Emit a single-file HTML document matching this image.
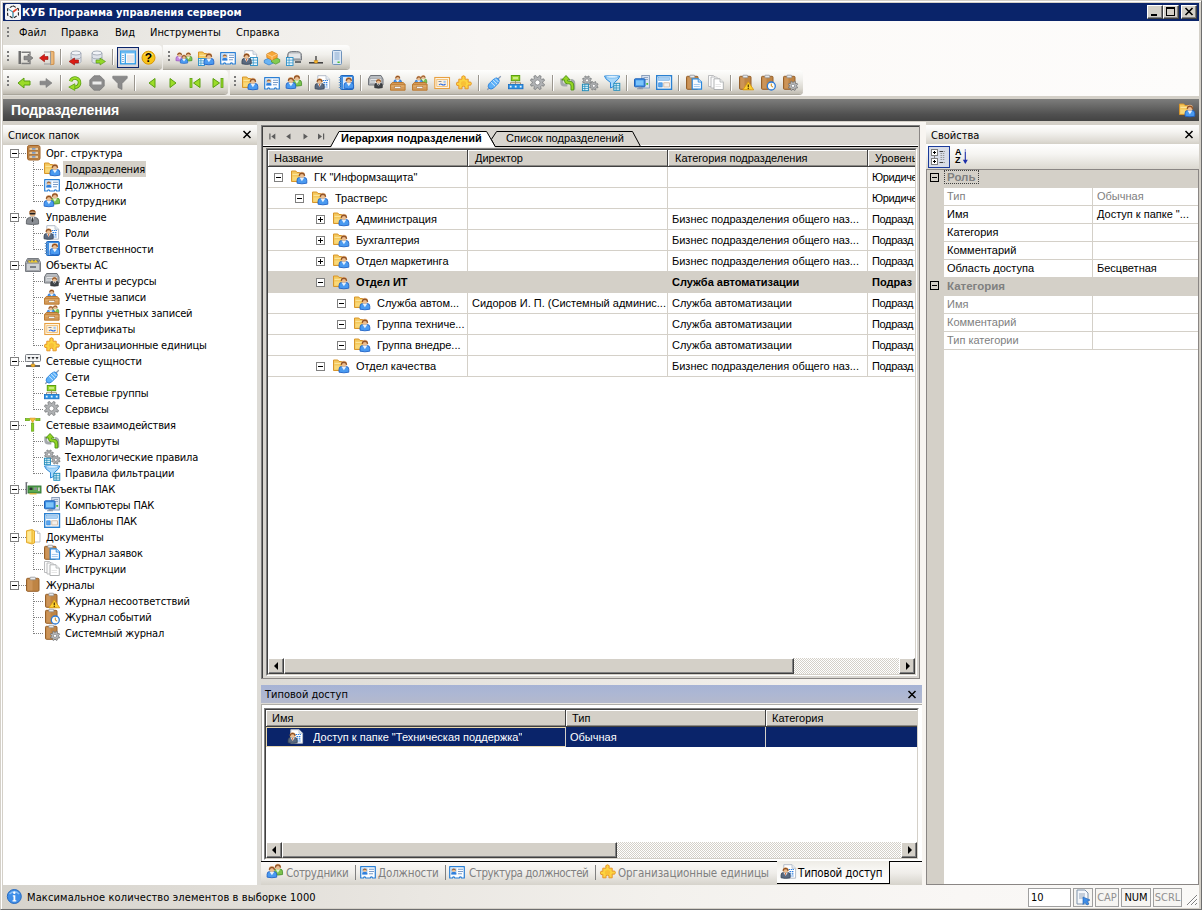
<!DOCTYPE html><html lang="ru"><head><meta charset="utf-8"><title>КУБ Программа управления сервером</title>
<style>
*{box-sizing:border-box;margin:0;padding:0}
html,body{width:1202px;height:910px;overflow:hidden;background:#d4d0c8}
body{position:relative;font-family:"DejaVu Sans Condensed","DejaVu Sans","Liberation Sans",sans-serif;font-size:11px;color:#000;line-height:1}
.abs{position:absolute}
.mss{font-family:"Liberation Sans","DejaVu Sans",sans-serif;font-size:11px}
.tah{font-family:"DejaVu Sans Condensed","DejaVu Sans","Liberation Sans",sans-serif;font-size:11px}
.t{position:absolute;white-space:nowrap;line-height:16px;height:16px}
.tt{position:absolute;white-space:nowrap;line-height:16px;height:16px;margin-top:1px;letter-spacing:-0.17px}
svg{display:block;overflow:visible}
.ic{position:absolute;width:16px;height:16px}
#frame{left:0;top:0;width:1202px;height:910px;background:#d4d0c8;border:1px solid;border-color:#d4d0c8 #6e6e6e #6e6e6e #d4d0c8;box-shadow:inset 1px 1px 0 #fff,inset -1px -1px 0 #d4d0c8}
#title{left:3px;top:3px;width:1196px;height:18px;background:#0a246a;color:#fff;font-weight:bold;font-size:11px}
#menubar{left:3px;top:21px;width:1196px;height:75px;background:linear-gradient(90deg,#dfddd7 0%,#efede9 18%,#f8f6f3 40%,#fcfaf8 65%,#fdfcfb 100%)}
.menu{font-size:11px;top:25px}
.strip{position:absolute;height:24px;border-radius:0 4px 4px 0;background:linear-gradient(180deg,#fefefd 0%,#f1f0ec 40%,#dad7cf 78%,#bdb9af 100%);box-shadow:0 1px 0 #aaa69c}
.grip{position:absolute;width:2px;height:12px;background:repeating-linear-gradient(180deg,#7a7a7a 0 2px,transparent 2px 4px)}
.sep{position:absolute;width:1px;height:16px;background:#9a968e;box-shadow:1px 0 0 #fff}
#hdr{left:3px;top:99px;width:1196px;height:22px;background:linear-gradient(180deg,#7d7d7c 0%,#6a6a69 30%,#505050 70%,#434343 100%);color:#fff;font-family:"Liberation Sans","DejaVu Sans",sans-serif;font-weight:bold;font-size:14px;letter-spacing:-0.08px}
.phead{position:absolute;height:20px;background:linear-gradient(180deg,#fefefe 0%,#f4f3f0 35%,#dedbd4 80%,#d0ccc3 100%);font-size:11px}
.sunk{position:absolute;border:1px solid;border-color:#808080 #fff #fff #808080}
.sunk>.in{position:absolute;left:0;top:0;right:0;bottom:0;border:1px solid;border-color:#404040 #d4d0c8 #d4d0c8 #404040;overflow:hidden}
.gh{position:absolute;background:#d4d0c8;border-right:1px solid #404040;border-bottom:1px solid #404040;box-shadow:inset 1px 1px 0 #fff,inset 0 -1px 0 #8c8a86;font-family:"Liberation Sans","DejaVu Sans",sans-serif;font-size:11px;height:17px;line-height:15px;padding-top:1px;white-space:nowrap;overflow:hidden}
.row{position:absolute;left:0;height:21px;border-bottom:1px solid #d4d0c8;font-family:"Liberation Sans","DejaVu Sans",sans-serif;font-size:11px}
  .cell{position:absolute;top:0;height:20px;line-height:21px;white-space:nowrap;overflow:hidden}
.vline{position:absolute;width:1px;background:#d4d0c8}
.pm{position:absolute;width:9px;height:9px;border:1px solid #808080;background:#fff}
.pm:before{content:"";position:absolute;left:1px;top:3px;width:5px;height:1px;background:#000}
.pm.plus:after{content:"";position:absolute;left:3px;top:1px;width:1px;height:5px;background:#000}
.sb{position:absolute;height:16px;background:repeating-conic-gradient(#fff 0 25%,#d4d0c8 0 50%) 0 0/2px 2px}
.sbbtn{position:absolute;top:0;width:16px;height:16px;background:#d4d0c8;border:1px solid;border-color:#fff #404040 #404040 #fff;box-shadow:inset -1px -1px 0 #808080}
.thumb{position:absolute;top:0;height:16px;background:#d4d0c8;border:1px solid;border-color:#fff #404040 #404040 #fff;box-shadow:inset -1px -1px 0 #808080}
.tri{position:absolute;width:0;height:0;border:4px solid transparent}
.prow{position:absolute;left:17px;height:18px;border-bottom:1px solid #d4d0c8;background:#fff;font-family:"Liberation Sans","DejaVu Sans",sans-serif;font-size:11px;line-height:16px;white-space:nowrap}
.pcat{position:absolute;left:0;height:18px;background:#d4d0c8;font-family:"Liberation Sans","DejaVu Sans",sans-serif;font-size:11px;font-weight:bold;color:#808080;line-height:17px}
.stbox{position:absolute;top:888px;height:19px;border:1px solid #a0a0a0;font-size:11px;line-height:17px;text-align:center;background:#f6f5f2}
.dotv{position:absolute;width:1px;background:repeating-linear-gradient(180deg,#808080 0 1px,transparent 1px 2px)}
.doth{position:absolute;height:1px;background:repeating-linear-gradient(90deg,#808080 0 1px,transparent 1px 2px)}
.btab{position:absolute;top:1px;height:22px;font-size:11px;color:#808080;line-height:22px;white-space:nowrap}
</style></head><body>
<div id="frame" class="abs"></div>
<div id="title" class="abs">
<div class="ic" style="left:2px;top:1px"><svg width="16" height="16" viewBox="0 0 16 16"><rect x="0" y="0" width="16" height="16" rx="1.500" fill="#f2f3f5"/><path d="M8 1.800l5.400 3.100v6.200l-5.400 3.100l-5.400-3.100v-6.200z" fill="#fbfbfc" stroke="#222" stroke-width="1.100" stroke-dasharray="3.200 1.600"/><path d="M8 8v5.500" stroke="#2a7f9a" stroke-width="1.200"/><path d="M8 8l-4.300-2.600" stroke="#3a9ab0" stroke-width="1.100"/><path d="M8 8l3.800-3" stroke="#e8452a" stroke-width="1.600"/></svg></div>
<span class="t" style="left:19px;top:2px">КУБ Программа управления сервером</span>
<div class="abs" style="left:1144px;top:2px;width:16px;height:14px;background:#d4d0c8;border:1px solid;border-color:#fff #404040 #404040 #fff;box-shadow:inset -1px -1px 0 #808080">
<div class="abs" style="left:3px;top:8px;width:6px;height:2px;background:#000"></div>
</div>
<div class="abs" style="left:1160px;top:2px;width:16px;height:14px;background:#d4d0c8;border:1px solid;border-color:#fff #404040 #404040 #fff;box-shadow:inset -1px -1px 0 #808080">
<div class="abs" style="left:2px;top:1px;width:9px;height:9px;border:1px solid #000;border-top-width:2px"></div>
</div>
<div class="abs" style="left:1178px;top:2px;width:16px;height:14px;background:#d4d0c8;border:1px solid;border-color:#fff #404040 #404040 #fff;box-shadow:inset -1px -1px 0 #808080">
<svg class="abs" style="left:3px;top:2px" width="8" height="7" viewBox="0 0 8 7"><path d="M0 0L7 7M7 0L0 7" stroke="#000" stroke-width="1.6" fill="none" transform="translate(.5 0)"/></svg>
</div>
</div>
<div id="menubar" class="abs"></div>
<div class="grip" style="left:7px;top:27px"></div>
<span class="t menu" style="left:19px">Файл</span>
<span class="t menu" style="left:61px">Правка</span>
<span class="t menu" style="left:115px">Вид</span>
<span class="t menu" style="left:150px">Инструменты</span>
<span class="t menu" style="left:236px">Справка</span>
<div class="strip" style="left:3px;top:45px;width:159px"></div>
<div class="strip" style="left:163px;top:45px;width:187px"></div>
<div class="grip" style="left:7px;top:51px"></div><div class="grip" style="left:168px;top:51px"></div>
<div class="abs" style="left:117px;top:47px;width:22px;height:21px;border:1px solid #0a246a;background:#d6d5da"></div>
<div class="ic" style="left:17px;top:50px"><svg width="16" height="16" viewBox="0 0 16 16"><rect x="1.500" y="1" width="2.500" height="13" fill="#6e6e6e"/><path d="M4.500 2.200h8.500v3M13 10.500v3h-8.500" fill="none" stroke="#7c7c7c" stroke-width="1.400"/><path d="M7 6.200h4v-2.200l5 4l-5 4v-2.200h-4z" fill="#8a8a8a" stroke="#606060" stroke-width=".6"/></svg></div>
<div class="ic" style="left:39px;top:50px"><svg width="16" height="16" viewBox="0 0 16 16"><path d="M11.500 1.200l3.500.6v12.400l-3.500.6z" fill="#ecb878" stroke="#c8843a" stroke-width=".8"/><path d="M5 2h6.500v12h-6.500" fill="none" stroke="#9a9a9a" stroke-width="1.100"/><path d="M9 6.500h-3.500v-2.300l-5 3.800l5 3.800v-2.300h3.500z" fill="#d81a14" stroke="#98100a" stroke-width=".6"/></svg></div>
<div class="ic" style="left:68px;top:50px"><svg width="16" height="16" viewBox="0 0 16 16"><path d="M3 3q0-2 5-2t5 2v8.500q0 2-5 2t-5-2z" fill="#dfe3ea" stroke="#a0a8b4" stroke-width=".9"/><path d="M3 3q0 2 5 2t5-2M3 7q0 2 5 2t5-2" fill="none" stroke="#a0a8b4" stroke-width=".9"/><ellipse cx="8" cy="3" rx="4" ry="1.200" fill="#f2f4f8"/><path d="M10.500 10h-4v-2l-5.500 3.500l5.500 3.500v-2h4z" fill="#dc1c14" stroke="#98100a" stroke-width=".6"/></svg></div>
<div class="ic" style="left:90px;top:50px"><svg width="16" height="16" viewBox="0 0 16 16"><path d="M2 3q0-2 5-2t5 2v8.500q0 2-5 2t-5-2z" fill="#dfe3ea" stroke="#a0a8b4" stroke-width=".9"/><path d="M2 3q0 2 5 2t5-2M2 7q0 2 5 2t5-2" fill="none" stroke="#a0a8b4" stroke-width=".9"/><ellipse cx="7" cy="3" rx="4" ry="1.200" fill="#f2f4f8"/><path d="M6 10h4v-2l5.500 3.500l-5.500 3.500v-2h-4z" fill="#94d828" stroke="#4f9010" stroke-width=".6"/></svg></div>
<div class="ic" style="left:120px;top:50px"><svg width="16" height="16" viewBox="0 0 16 16"><rect x=".7" y="1.200" width="14.600" height="12.600" fill="#fff" stroke="#2a9ae8" stroke-width="1.300"/><rect x=".7" y="1.200" width="14.600" height="2.200" fill="#6ab8f0"/><path d="M5.300 3.400v10.400" stroke="#2a9ae8" stroke-width="1.200"/><path d="M2 5.500h2M2 7.500h2M2 9.500h2M2 11.500h2" stroke="#7a9cc4" stroke-width=".8"/><rect x="6.800" y="4.800" width="7.200" height="7.800" fill="#e6e6ea"/></svg></div>
<div class="ic" style="left:141px;top:50px"><svg width="16" height="16" viewBox="0 0 16 16"><circle cx="7.500" cy="7.700" r="6.500" fill="#f8c418" stroke="#d89808" stroke-width="1"/><path d="M3.500 5q4-3.500 8 0" fill="none" stroke="#fdea90" stroke-width="1.500"/></svg><span style="position:absolute;left:0;top:0;width:15px;height:16px;line-height:16px;text-align:center;font:bold 12px/16px 'Liberation Sans',sans-serif;color:#000">?</span></div>
<div class="ic" style="left:176px;top:50px"><svg width="16" height="16" viewBox="0 0 16 16"><path d="M-0.03 10.64v-2.15q0 -2.15 1.99 -2.15h3.26q1.99 0 1.99 2.15v2.15q-3.63 0.89 -7.25 0z" fill="#c48ae0" stroke="#8a4ab8" stroke-width="0.59"/><path d="M1.79 6.49h3.63l-1.81 2.66z" fill="#f1e2fa"/><circle cx="3.6" cy="4.42" r="2.22" fill="#ecbf92"/><path d="M1.38 5.09A2.22 2.22 0 1 1 5.82 5.09L5.20 5.09Q4.93 3.42 3.60 3.75Q2.27 3.42 2.00 5.09z" fill="#8a4a1c" stroke="#8a4a1c" stroke-width="0.30"/><path d="M8.77 10.64v-2.15q0 -2.15 1.99 -2.15h3.26q1.99 0 1.99 2.15v2.15q-3.63 0.89 -7.25 0z" fill="#7cc24e" stroke="#3f8a24" stroke-width="0.59"/><path d="M10.59 6.49h3.63l-1.81 2.66z" fill="#e4f5d8"/><circle cx="12.4" cy="4.42" r="2.22" fill="#ecbf92"/><path d="M10.18 5.09A2.22 2.22 0 1 1 14.62 5.09L14.00 5.09Q13.73 3.42 12.40 3.75Q11.07 3.42 10.80 5.09z" fill="#8a4a1c" stroke="#8a4a1c" stroke-width="0.30"/><path d="M4.37 13.04v-2.15q0 -2.15 1.99 -2.15h3.26q1.99 0 1.99 2.15v2.15q-3.63 0.89 -7.25 0z" fill="#4a9af0" stroke="#1a5cc0" stroke-width="0.59"/><path d="M6.19 8.89h3.63l-1.81 2.66z" fill="#e6f1fd"/><circle cx="8" cy="6.82" r="2.22" fill="#ecbf92"/><path d="M5.78 7.49A2.22 2.22 0 1 1 10.22 7.49L9.60 7.49Q9.33 5.82 8.00 6.15Q6.67 5.82 6.40 7.49z" fill="#8a4a1c" stroke="#8a4a1c" stroke-width="0.30"/></svg></div>
<div class="ic" style="left:198px;top:50px"><svg width="16" height="16" viewBox="0 0 16 16"><path d="M.5 2h4.300l1.200 1.500h5.500v9h-11z" fill="#f4c85c" stroke="#d8962a" stroke-width="1"/><path d="M1.500 4.800h9v1.200h-9z" fill="#fbe49a"/><path d="M1.500 7.500h5v4h-5z" fill="#f9d878"/><rect x="0.5" y="8.5" width="6" height="7" fill="#eaf6fc" stroke="#2a90c8" stroke-width=".9"/><path d="M0.5 10.83h6M0.5 13.17h6M2.90 8.5v7" stroke="#2a90c8" stroke-width=".7"/><path d="M6.00 14.20v-2.90q0 -2.90 2.70 -2.90h4.41q2.70 0 2.70 2.90v2.90q-4.90 1.20 -9.80 0z" fill="#4a9af0" stroke="#1a5cc0" stroke-width="0.80"/><path d="M8.45 8.60h4.90l-2.45 3.60z" fill="#e6f1fd"/><circle cx="10.9" cy="5.80" r="3.00" fill="#ecbf92"/><path d="M7.90 6.70A3.00 3.00 0 1 1 13.90 6.70L13.06 6.70Q12.70 4.45 10.90 4.90Q9.10 4.45 8.74 6.70z" fill="#8a4a1c" stroke="#8a4a1c" stroke-width="0.40"/></svg></div>
<div class="ic" style="left:220px;top:50px"><svg width="16" height="16" viewBox="0 0 16 16"><path d="M.7 2.700h14.600v11.300h-2.800a1.100 1.100 0 0 0-2.200 0h-4.600a1.100 1.100 0 0 0-2.200 0h-2.800z" fill="#fbfdff" stroke="#2a7fd4" stroke-width="1.200" stroke-linejoin="round"/><rect x="2.200" y="4.200" width="5.200" height="6.300" fill="#a4cef6"/><circle cx="4.800" cy="6.200" r="1.800" fill="#ecbf92"/><path d="M3 6.500a1.800 1.800 0 1 1 3.600 0q-.4-1.200-1.800-1.100q-1.400-.1-1.800 1.100z" fill="#8a4a1c" stroke="#8a4a1c" stroke-width=".3"/><path d="M2.300 10.500v-.9q0-1.500 1.500-1.500h2q1.500 0 1.500 1.500v.9z" fill="#2f7fdc"/><path d="M9 5.200h5M9 7.500h5M9 9.800h4" stroke="#7a9cc8" stroke-width="1.100"/></svg></div>
<div class="ic" style="left:242px;top:50px"><svg width="16" height="16" viewBox="0 0 16 16"><path d="M2.800 .7h8.200l3.600 3.600v9.900h-11.800z" fill="#fff" stroke="#b4bcc8" stroke-width="1"/><path d="M11 .7v3.600h3.600" fill="#e8eef6" stroke="#b4bcc8" stroke-width=".8"/><rect x="8.5" y="7.5" width="7" height="8" fill="#eaf6fc" stroke="#2a90c8" stroke-width=".9"/><path d="M8.5 10.17h7M8.5 12.83h7M11.30 7.5v8" stroke="#2a90c8" stroke-width=".7"/><path d="M-0.06 13.83v-2.75q0 -2.75 2.56 -2.75h4.19q2.56 0 2.56 2.75v2.75q-4.66 1.14 -9.31 0z" fill="#5a6a80" stroke="#35404e" stroke-width="0.76"/><path d="M2.27 8.51h4.66l-2.33 3.42z" fill="#dfe6ee"/><path d="M4.03 8.89h1.14l-0.57 3.31z" fill="#e0601c"/><circle cx="4.6" cy="5.85" r="2.85" fill="#ecbf92"/><path d="M1.75 6.70A2.85 2.85 0 1 1 7.45 6.70L6.65 6.70Q6.31 4.57 4.60 5.00Q2.89 4.57 2.55 6.70z" fill="#8a4a1c" stroke="#8a4a1c" stroke-width="0.38"/></svg></div>
<div class="ic" style="left:264px;top:50px"><svg width="16" height="16" viewBox="0 0 16 16"><path d="M.3 10.200l4.700-2.200l4.700 2.200v2.600l-4.700 2.200l-4.700-2.200z" fill="#6ab4f4" stroke="#2a78cc" stroke-width=".7"/><path d="M7.500 9.500l4.200-2l4 2v2.600l-4 2l-4.200-2z" fill="#84cc50" stroke="#4a9428" stroke-width=".7"/><path d="M2.800 4l5.200-2.600l5.200 2.600v3.600l-5.200 2.600l-5.200-2.600z" fill="#f8a838" stroke="#d07a10" stroke-width=".7"/><path d="M2.800 4l5.200 2.600l5.200-2.600M8 6.600v3.600" fill="none" stroke="#fcd8a0" stroke-width=".8"/></svg></div>
<div class="ic" style="left:286px;top:50px"><svg width="16" height="16" viewBox="0 0 16 16"><path d="M1.500 5.500q0-4 4-4h5q5 0 5 4v4.500h-14z" fill="#b4b8bc" stroke="#7a7e84" stroke-width="1"/><rect x="3" y="3.500" width="11" height="4.500" fill="#e4e6e8"/><rect x="0.5" y="7.5" width="6.5" height="8" fill="#eaf6fc" stroke="#2a90c8" stroke-width=".9"/><path d="M0.5 10.17h6.5M0.5 12.83h6.5M3.10 7.5v8" stroke="#2a90c8" stroke-width=".7"/><path d="M9 12h6" stroke="#4a4e54" stroke-width="1.600"/></svg></div>
<div class="ic" style="left:308px;top:50px"><svg width="16" height="16" viewBox="0 0 16 16"><path d="M1 12.800h14" stroke="#3a3a3a" stroke-width="1.500"/><path d="M8 6v6" stroke="#3a3a3a" stroke-width="1.300"/><path d="M6.200 10.500h3.600l-.5 2.600h-2.600z" fill="#f4b428" stroke="#c88210" stroke-width=".5"/></svg></div>
<div class="ic" style="left:329px;top:50px"><svg width="16" height="16" viewBox="0 0 16 16"><rect x="3.500" y=".5" width="9" height="14" rx="1" fill="#dce8f6" stroke="#6f93bb" stroke-width="1"/><path d="M5.500 3h5M5.500 5h5M5.500 7h5M5.500 9h5" stroke="#88aad0" stroke-width="1"/><rect x="8.500" y="11.500" width="2.200" height="1.500" fill="#4cc030"/></svg></div>
<div class="sep" style="left:60px;top:49px"></div>
<div class="sep" style="left:112px;top:49px"></div>
<div class="strip" style="left:3px;top:70px;width:225px"></div>
<div class="strip" style="left:230px;top:70px;width:573px"></div>
<div class="grip" style="left:7px;top:76px"></div><div class="grip" style="left:234px;top:76px"></div>
<div class="ic" style="left:16px;top:75px"><svg width="16" height="16" viewBox="0 0 16 16"><path d="M14 6h-6v-3l-6 5l6 5v-3h6z" fill="#9cdc28" stroke="#5aa010" stroke-width="1" stroke-linejoin="round"/></svg></div>
<div class="ic" style="left:38px;top:75px"><svg width="16" height="16" viewBox="0 0 16 16"><path d="M2 6.200h6v-2.700l6 4.500l-6 4.500v-2.700h-6z" fill="#8a8a8a" stroke="#787878" stroke-width=".6"/></svg></div>
<div class="ic" style="left:67px;top:75px"><svg width="16" height="16" viewBox="0 0 16 16"><path d="M3.600 6.200A4.600 4.600 0 1 1 7.500 12.200" fill="none" stroke="#5aa010" stroke-width="3.600"/><path d="M3.600 6.200A4.600 4.600 0 1 1 7.500 12.200" fill="none" stroke="#9cdc28" stroke-width="2"/><path d="M7.800 8.800v6.600l-6-3.300z" fill="#9cdc28" stroke="#5aa010" stroke-width=".8" stroke-linejoin="round"/></svg></div>
<div class="ic" style="left:89px;top:75px"><svg width="16" height="16" viewBox="0 0 16 16"><path d="M5 .8h6l4.200 4.200v6l-4.200 4.200h-6l-4.200-4.200v-6z" fill="#8c8c8c" stroke="#787878" stroke-width=".8"/><rect x="3.500" y="6.500" width="9" height="3" fill="#ececec"/></svg></div>
<div class="ic" style="left:112px;top:75px"><svg width="16" height="16" viewBox="0 0 16 16"><path d="M.8 1.200h14.400v2l-5.200 5.300v6l-4-2v-4l-5.200-5.300z" fill="#8a8a8a" stroke="#787878" stroke-width=".7"/></svg></div>
<div class="ic" style="left:144px;top:75px"><svg width="16" height="16" viewBox="0 0 16 16"><path d="M11 3.500v9l-6-4.500z" fill="#9cdc28" stroke="#5aa010" stroke-width="1" stroke-linejoin="round"/></svg></div>
<div class="ic" style="left:165px;top:75px"><svg width="16" height="16" viewBox="0 0 16 16"><path d="M5 3.500v9l6-4.500z" fill="#9cdc28" stroke="#5aa010" stroke-width="1" stroke-linejoin="round"/></svg></div>
<div class="ic" style="left:187px;top:75px"><svg width="16" height="16" viewBox="0 0 16 16"><rect x="3" y="3.500" width="2" height="9" fill="#9cdc28" stroke="#5aa010" stroke-width=".8"/><path d="M13 3.500v9l-6.500-4.500z" fill="#9cdc28" stroke="#5aa010" stroke-width="1" stroke-linejoin="round"/></svg></div>
<div class="ic" style="left:210px;top:75px"><svg width="16" height="16" viewBox="0 0 16 16"><rect x="11" y="3.500" width="2" height="9" fill="#9cdc28" stroke="#5aa010" stroke-width=".8"/><path d="M3 3.500v9l6.500-4.500z" fill="#9cdc28" stroke="#5aa010" stroke-width="1" stroke-linejoin="round"/></svg></div>
<div class="ic" style="left:242px;top:75px"><svg width="16" height="16" viewBox="0 0 16 16"><path d="M.5 2h4.300l1.200 1.500h5.500v9h-11z" fill="#f4c85c" stroke="#d8962a" stroke-width="1"/><path d="M1.500 4.800h9v1.200h-9z" fill="#fbe49a"/><path d="M1.500 7.500h5v4h-5z" fill="#f9d878"/><path d="M6.00 14.20v-2.90q0 -2.90 2.70 -2.90h4.41q2.70 0 2.70 2.90v2.90q-4.90 1.20 -9.80 0z" fill="#4a9af0" stroke="#1a5cc0" stroke-width="0.80"/><path d="M8.45 8.60h4.90l-2.45 3.60z" fill="#e6f1fd"/><circle cx="10.9" cy="5.80" r="3.00" fill="#ecbf92"/><path d="M7.90 6.70A3.00 3.00 0 1 1 13.90 6.70L13.06 6.70Q12.70 4.45 10.90 4.90Q9.10 4.45 8.74 6.70z" fill="#8a4a1c" stroke="#8a4a1c" stroke-width="0.40"/></svg></div>
<div class="ic" style="left:264px;top:75px"><svg width="16" height="16" viewBox="0 0 16 16"><path d="M.7 2.700h14.600v11.300h-2.800a1.100 1.100 0 0 0-2.200 0h-4.600a1.100 1.100 0 0 0-2.200 0h-2.800z" fill="#fbfdff" stroke="#2a7fd4" stroke-width="1.200" stroke-linejoin="round"/><rect x="2.200" y="4.200" width="5.200" height="6.300" fill="#a4cef6"/><circle cx="4.800" cy="6.200" r="1.800" fill="#ecbf92"/><path d="M3 6.500a1.800 1.800 0 1 1 3.600 0q-.4-1.200-1.800-1.100q-1.400-.1-1.800 1.100z" fill="#8a4a1c" stroke="#8a4a1c" stroke-width=".3"/><path d="M2.300 10.500v-.9q0-1.500 1.500-1.500h2q1.500 0 1.500 1.500v.9z" fill="#2f7fdc"/><path d="M9 5.200h5M9 7.500h5M9 9.800h4" stroke="#7a9cc8" stroke-width="1.100"/></svg></div>
<div class="ic" style="left:286px;top:75px"><svg width="16" height="16" viewBox="0 0 16 16"><path d="M6.25 10.53v-2.75q0 -2.75 2.56 -2.75h4.19q2.56 0 2.56 2.75v2.75q-4.66 1.14 -9.31 0z" fill="#7cc24e" stroke="#3f8a24" stroke-width="0.76"/><path d="M8.57 5.21h4.66l-2.33 3.42z" fill="#e4f5d8"/><circle cx="10.9" cy="2.55" r="2.85" fill="#ecbf92"/><path d="M8.05 3.40A2.85 2.85 0 1 1 13.75 3.40L12.95 3.40Q12.61 1.27 10.90 1.69Q9.19 1.27 8.85 3.40z" fill="#8a4a1c" stroke="#8a4a1c" stroke-width="0.38"/><path d="M0.10 13.17v-2.84q0 -2.84 2.64 -2.84h4.32q2.64 0 2.64 2.84v2.84q-4.80 1.18 -9.60 0z" fill="#4a9af0" stroke="#1a5cc0" stroke-width="0.78"/><path d="M2.50 7.68h4.80l-2.40 3.52z" fill="#e6f1fd"/><circle cx="4.9" cy="4.94" r="2.94" fill="#ecbf92"/><path d="M1.96 5.82A2.94 2.94 0 1 1 7.84 5.82L7.02 5.82Q6.66 3.62 4.90 4.06Q3.14 3.62 2.78 5.82z" fill="#8a4a1c" stroke="#8a4a1c" stroke-width="0.39"/></svg></div>
<div class="ic" style="left:315px;top:75px"><svg width="16" height="16" viewBox="0 0 16 16"><path d="M2.800 .7h8.200l3.600 3.600v9.900h-11.800z" fill="#fff" stroke="#b4bcc8" stroke-width="1"/><path d="M11 .7v3.600h3.600" fill="#e8eef6" stroke="#b4bcc8" stroke-width=".8"/><path d="M7.500 5.500h5.500M8.500 7.700h4.500M8.500 9.900h4.500M9 12h3.500" stroke="#2b7de0" stroke-width="1.200" stroke-dasharray="1.600 .7"/><path d="M0.04 13.80v-2.70q0 -2.70 2.51 -2.70h4.10q2.51 0 2.51 2.70v2.70q-4.56 1.12 -9.11 0z" fill="#5a6a80" stroke="#35404e" stroke-width="0.74"/><path d="M2.32 8.59h4.56l-2.28 3.34z" fill="#dfe6ee"/><path d="M4.04 8.97h1.12l-0.56 3.24z" fill="#e0601c"/><circle cx="4.6" cy="5.99" r="2.79" fill="#ecbf92"/><path d="M1.81 6.83A2.79 2.79 0 1 1 7.39 6.83L6.61 6.83Q6.27 4.73 4.60 5.15Q2.93 4.73 2.59 6.83z" fill="#8a4a1c" stroke="#8a4a1c" stroke-width="0.37"/></svg></div>
<div class="ic" style="left:338px;top:75px"><svg width="16" height="16" viewBox="0 0 16 16"><rect x="2.500" y=".5" width="12.800" height="14" rx="1" fill="#3f8fe4" stroke="#1f66bd" stroke-width="1"/><rect x="5" y="2" width="9" height="11.500" fill="#dcebfb"/><path d="M.8 2.500h3M.8 5h3M.8 7.500h3M.8 10h3M.8 12.500h3" stroke="#5f8fc2" stroke-width="1.100"/><path d="M6.00 13.17v-2.84q0 -2.84 2.64 -2.84h4.32q2.64 0 2.64 2.84v2.84q-4.80 1.18 -9.60 0z" fill="#4a9af0" stroke="#1a5cc0" stroke-width="0.78"/><path d="M8.40 7.68h4.80l-2.40 3.52z" fill="#e6f1fd"/><circle cx="10.8" cy="4.94" r="2.94" fill="#ecbf92"/><path d="M7.86 5.82A2.94 2.94 0 1 1 13.74 5.82L12.92 5.82Q12.56 3.62 10.80 4.06Q9.04 3.62 8.68 5.82z" fill="#8a4a1c" stroke="#8a4a1c" stroke-width="0.39"/></svg></div>
<div class="ic" style="left:368px;top:75px"><svg width="16" height="16" viewBox="0 0 16 16"><path d="M.5 4l2-3.500h10.500l2 3.500v6h-14.500z" fill="#b8bcc0" stroke="#70747a" stroke-width="1"/><rect x="2" y="3.500" width="11.500" height="5" fill="#e4e6e8" stroke="#8a8e94" stroke-width=".5"/><path d="M3 5.500h5M3 7h4" stroke="#9aa0a8" stroke-width=".7"/><path d="M6.68 12.69v-2.26q0 -2.26 2.10 -2.26h3.44q2.10 0 2.10 2.26v2.26q-3.82 0.94 -7.64 0z" fill="#404448" stroke="#222426" stroke-width="0.62"/><path d="M8.59 8.32h3.82l-1.91 2.80z" fill="#fff"/><path d="M10.03 8.64h0.94l-0.47 2.71z" fill="#222"/><circle cx="10.5" cy="6.14" r="2.34" fill="#ecbf92"/><path d="M8.16 6.84A2.34 2.34 0 1 1 12.84 6.84L12.18 6.84Q11.90 5.09 10.50 5.44Q9.10 5.09 8.82 6.84z" fill="#8a4a1c" stroke="#8a4a1c" stroke-width="0.31"/></svg></div>
<div class="ic" style="left:390px;top:75px"><svg width="16" height="16" viewBox="0 0 16 16"><path d="M3.88 9.19v-2.26q0 -2.26 2.10 -2.26h3.44q2.10 0 2.10 2.26v2.26q-3.82 0.94 -7.64 0z" fill="#4a9af0" stroke="#1a5cc0" stroke-width="0.62"/><path d="M5.79 4.82h3.82l-1.91 2.80z" fill="#e6f1fd"/><circle cx="7.7" cy="2.64" r="2.34" fill="#ecbf92"/><path d="M5.36 3.34A2.34 2.34 0 1 1 10.04 3.34L9.38 3.34Q9.10 1.59 7.70 1.94Q6.30 1.59 6.02 3.34z" fill="#8a4a1c" stroke="#8a4a1c" stroke-width="0.31"/><path d="M.5 9.500l1.800-2h11l1.800 2v5.700h-14.600z" fill="#d49a58" stroke="#b87428" stroke-width=".9"/><path d="M.5 9.800h14.600" stroke="#b87428" stroke-width=".8"/><path d="M1.200 10.500h13.200v1h-13.200z" fill="#e8b878"/><rect x="4.800" y="11.600" width="6" height="1.800" fill="#eef4fa" stroke="#a06428" stroke-width=".4"/></svg></div>
<div class="ic" style="left:412px;top:75px"><svg width="16" height="16" viewBox="0 0 16 16"><path d="M7.87 7.98v-2.03q0 -2.03 1.89 -2.03h3.09q1.89 0 1.89 2.03v2.03q-3.43 0.84 -6.86 0z" fill="#7cc24e" stroke="#3f8a24" stroke-width="0.56"/><path d="M9.59 4.06h3.43l-1.72 2.52z" fill="#e4f5d8"/><circle cx="11.3" cy="2.10" r="2.10" fill="#ecbf92"/><path d="M9.20 2.73A2.10 2.10 0 1 1 13.40 2.73L12.81 2.73Q12.56 1.15 11.30 1.47Q10.04 1.15 9.79 2.73z" fill="#8a4a1c" stroke="#8a4a1c" stroke-width="0.28"/><path d="M3.12 9.35v-2.17q0 -2.17 2.02 -2.17h3.31q2.02 0 2.02 2.17v2.17q-3.68 0.90 -7.35 0z" fill="#4a9af0" stroke="#1a5cc0" stroke-width="0.60"/><path d="M4.96 5.15h3.68l-1.84 2.70z" fill="#e6f1fd"/><circle cx="6.8" cy="3.05" r="2.25" fill="#ecbf92"/><path d="M4.55 3.72A2.25 2.25 0 1 1 9.05 3.72L8.42 3.72Q8.15 2.04 6.80 2.38Q5.45 2.04 5.18 3.72z" fill="#8a4a1c" stroke="#8a4a1c" stroke-width="0.30"/><path d="M.5 9.500l1.800-2h11l1.800 2v5.700h-14.600z" fill="#d49a58" stroke="#b87428" stroke-width=".9"/><path d="M.5 9.800h14.600" stroke="#b87428" stroke-width=".8"/><path d="M1.200 10.500h13.200v1h-13.200z" fill="#e8b878"/><rect x="4.800" y="11.600" width="6" height="1.800" fill="#eef4fa" stroke="#a06428" stroke-width=".4"/></svg></div>
<div class="ic" style="left:434px;top:75px"><svg width="16" height="16" viewBox="0 0 16 16"><rect x=".8" y="2.500" width="14.700" height="11" fill="#fff8ec" stroke="#e8a040" stroke-width="1.100"/><rect x="2.800" y="4.500" width="10.700" height="7" fill="#fdf0dc" stroke="#eeb868" stroke-width=".8"/><path d="M4.500 6.500h3" stroke="#8a8e94" stroke-width="1"/><rect x="9.500" y="5.800" width="2.200" height="2" fill="#9cc4f0"/><path d="M5 10q1.500-1.800 3-.5t3.500-.5" fill="none" stroke="#2a6ae0" stroke-width="1.100"/></svg></div>
<div class="ic" style="left:456px;top:75px"><svg width="16" height="16" viewBox="0 0 16 16"><path d="M2.800 4.200h3.200q-1.100-3.400 1.500-3.400t1.500 3.400h3.200v3q3.200-1.100 3.200 1.400t-3.200 1.400v3.800h-3.300q1.100-2.600-1.400-2.600t-1.400 2.600h-3.300v-3.400q-2.400 1.100-2.400-1.500t2.400-1.500z" fill="#fcd440" stroke="#e8962a" stroke-width="1"/><circle cx="7.500" cy="8.500" r="2.600" fill="#f8b830" opacity=".7"/></svg></div>
<div class="ic" style="left:486px;top:75px"><svg width="16" height="16" viewBox="0 0 16 16"><path d="M1.300 14.700l2.500-2.500M12.200 3.800l2.600-2.600" stroke="#8a9ab0" stroke-width="1.300"/><path d="M3 8.800l5-5q2.600-1.800 4.400 0q1.800 1.800 0 4.400l-5 5q-2.600 1.800-4.400 0q-1.800-1.800 0-4.400z" fill="#5cb0f8" stroke="#2a80d8" stroke-width=".9"/><path d="M4.800 7l4.200 4.200M6.800 5l4.200 4.200M8.800 3.300l3.900 3.900" stroke="#d4ecfe" stroke-width="1"/></svg></div>
<div class="ic" style="left:508px;top:75px"><svg width="16" height="16" viewBox="0 0 16 16"><rect x="3.300" y=".5" width="8.400" height="5.200" fill="#98d428" stroke="#5aa010" stroke-width="1"/><rect x="5" y="2" width="5" height="2.200" fill="#c8ec80"/><path d="M7.500 5.700v2M2.500 9.500v-1.800h10v1.800M7.500 7.700v1.800" stroke="#a08868" stroke-width=".9" fill="none"/><rect x=".4" y="9.400" width="14.600" height="4.400" fill="#2a92e4" stroke="#1a6cc0" stroke-width=".8"/><rect x="1.800" y="10.700" width="1.800" height="1.800" fill="#e8f4fe"/><rect x="6.800" y="10.700" width="1.800" height="1.800" fill="#e8f4fe"/><rect x="11.800" y="10.700" width="1.800" height="1.800" fill="#e8f4fe"/></svg></div>
<div class="ic" style="left:530px;top:75px"><svg width="16" height="16" viewBox="0 0 16 16"><path d="M14.55 9.40L13.83 11.14L11.67 10.70L10.70 11.67L11.14 13.83L9.40 14.55L8.18 12.71L6.82 12.71L5.60 14.55L3.86 13.83L4.30 11.67L3.33 10.70L1.17 11.14L0.45 9.40L2.29 8.18L2.29 6.82L0.45 5.60L1.17 3.86L3.33 4.30L4.30 3.33L3.86 1.17L5.60 0.45L6.82 2.29L8.18 2.29L9.40 0.45L11.14 1.17L10.70 3.33L11.67 4.30L13.83 3.86L14.55 5.60L12.71 6.82L12.71 8.18z" fill="#b0b2b4" stroke="#707274" stroke-width=".7" stroke-linejoin="round"/><circle cx="7.5" cy="7.5" r="2.48" fill="#fff" stroke="#707274" stroke-width=".6"/></svg></div>
<div class="ic" style="left:560px;top:75px"><svg width="16" height="16" viewBox="0 0 16 16"><path d="M1.800 3.500v4q0 2.500 2.500 2.500h3" fill="none" stroke="#a4a8ac" stroke-width="3"/><path d="M13.800 14.500v-6q0-3-3-3" fill="none" stroke="#a4a8ac" stroke-width="3"/><path d="M11 15v-4q0-2.200-2.200-2.200h-1.300q-3 0-3-3v-.8h-2.700l4.200-4.500l4.200 4.500h-2.700v.6q0 .6.600.6h.9q4.800 0 4.800 4.800v4z" fill="#94d424" stroke="#4a9010" stroke-width=".9" stroke-linejoin="round"/></svg></div>
<div class="ic" style="left:582px;top:75px"><svg width="16" height="16" viewBox="0 0 16 16"><path d="M9.44 6.59L8.99 7.70L7.63 7.42L7.02 8.03L7.30 9.39L6.19 9.84L5.43 8.68L4.57 8.68L3.81 9.84L2.70 9.39L2.98 8.03L2.37 7.42L1.01 7.70L0.56 6.59L1.72 5.83L1.72 4.97L0.56 4.21L1.01 3.10L2.37 3.38L2.98 2.77L2.70 1.41L3.81 0.96L4.57 2.12L5.43 2.12L6.19 0.96L7.30 1.41L7.02 2.77L7.63 3.38L8.99 3.10L9.44 4.21L8.28 4.97L8.28 5.83z" fill="#b0b2b4" stroke="#707274" stroke-width=".7" stroke-linejoin="round"/><circle cx="5" cy="5.4" r="1.56" fill="#fff" stroke="#707274" stroke-width=".6"/><path d="M16.05 11.94L15.61 13.00L14.31 12.73L13.73 13.31L14.00 14.61L12.94 15.05L12.21 13.94L11.39 13.94L10.66 15.05L9.60 14.61L9.87 13.31L9.29 12.73L7.99 13.00L7.55 11.94L8.66 11.21L8.66 10.39L7.55 9.66L7.99 8.60L9.29 8.87L9.87 8.29L9.60 6.99L10.66 6.55L11.39 7.66L12.21 7.66L12.94 6.55L14.00 6.99L13.73 8.29L14.31 8.87L15.61 8.60L16.05 9.66L14.94 10.39L14.94 11.21z" fill="#b0b2b4" stroke="#707274" stroke-width=".7" stroke-linejoin="round"/><circle cx="11.8" cy="10.8" r="1.50" fill="#fff" stroke="#707274" stroke-width=".6"/><rect x="0.4" y="9.2" width="6" height="6.5" fill="#d8f0f8" stroke="#1a88b8" stroke-width=".9"/><path d="M0.4 11.37h6M0.4 13.53h6M2.80 9.2v6.5" stroke="#1a88b8" stroke-width=".7"/></svg></div>
<div class="ic" style="left:604px;top:75px"><svg width="16" height="16" viewBox="0 0 16 16"><path d="M.5 1h15.200q0 2.500-5.200 6.500v3.500l-4 2v-5.500q-6-4-6-6.500z" fill="#a8d8fa" stroke="#2a88d8" stroke-width="1"/><ellipse cx="8.100" cy="1.800" rx="6.600" ry="1.300" fill="#e0f2fe" stroke="#5aa8e8" stroke-width=".6"/><rect x="9.8" y="8.3" width="6" height="7" fill="#d8f0f8" stroke="#1a88b8" stroke-width=".9"/><path d="M9.8 10.63h6M9.8 12.97h6M12.20 8.3v7" stroke="#1a88b8" stroke-width=".7"/></svg></div>
<div class="ic" style="left:634px;top:75px"><svg width="16" height="16" viewBox="0 0 16 16"><rect x="7.800" y=".5" width="7.600" height="12.500" fill="#dce4f0" stroke="#8098b8" stroke-width=".9"/><path d="M9.500 2.500h4.500M9.500 4.500h4.500" stroke="#8098b8" stroke-width=".8"/><rect x="12.300" y="8" width="1.800" height="1.800" fill="#4cc030"/><rect x=".5" y="3.800" width="10.500" height="8" rx=".8" fill="#3a8ee4" stroke="#1f62b8" stroke-width="1"/><rect x="2" y="5.300" width="7.500" height="5" fill="#7cc4fa"/><path d="M3 14.300h6v-1h-1.500v-1.500h-3v1.500h-1.500z" fill="#8a98ac"/></svg></div>
<div class="ic" style="left:656px;top:75px"><svg width="16" height="16" viewBox="0 0 16 16"><rect x=".7" y=".7" width="14.800" height="13.600" fill="#fff" stroke="#2a80d0" stroke-width="1.400"/><rect x="2.700" y="2.700" width="10.800" height="2.600" fill="#a8d0f4" stroke="#5aa0e0" stroke-width=".5"/><rect x="2.700" y="7.800" width="3.500" height="4.200" fill="#5aa6f0" stroke="#2a80d0" stroke-width=".6"/><rect x="7.800" y="7.800" width="5.700" height="4.200" fill="#f4f0ec" stroke="#c8a890" stroke-width=".7"/></svg></div>
<div class="ic" style="left:686px;top:75px"><svg width="16" height="16" viewBox="0 0 16 16"><rect x="0.5" y="1.300" width="11.500" height="13" rx="1" fill="#be8444" stroke="#96602a" stroke-width="1"/><path d="M1.5 2.500h4v11h-4z" fill="#cc9458"/><rect x="3.8" y=".2" width="5" height="2.600" rx=".8" fill="#e8eaec" stroke="#8a8e94" stroke-width=".7"/><path d="M6.200 3.800h6l3.300 3.300v7h-9.300z" fill="#f8fbff" stroke="#2a88dc" stroke-width="1.200"/><path d="M12.200 3.800v3.300h3.300" fill="#cfe4fa" stroke="#2a88dc" stroke-width=".8"/><path d="M7.800 9.500h6M7.800 11.500h6" stroke="#a8ccf0" stroke-width="1"/></svg></div>
<div class="ic" style="left:708px;top:75px"><svg width="16" height="16" viewBox="0 0 16 16"><path d="M.5 .5h5l2.500 2.500v8.500h-7.500z" fill="#fbfbfb" stroke="#b4b6b8" stroke-width=".9"/><path d="M3 2h5.500l2.500 2.500v8.500h-8z" fill="#fbfbfb" stroke="#b4b6b8" stroke-width=".9"/><path d="M6 3.800h6l3.300 3.300v7.400h-9.300z" fill="#fff" stroke="#a8aaac" stroke-width=".9"/><path d="M12 3.800v3.300h3.300" fill="#eceded" stroke="#a8aaac" stroke-width=".7"/><path d="M7.500 9.500h5.500M7.500 11.500h5.500" stroke="#e0e0e0" stroke-width=".8"/></svg></div>
<div class="ic" style="left:738px;top:75px"><svg width="16" height="16" viewBox="0 0 16 16"><rect x="1.5" y="1.300" width="11.500" height="13" rx="1" fill="#be8444" stroke="#96602a" stroke-width="1"/><path d="M2.5 2.500h4v11h-4z" fill="#cc9458"/><rect x="4.8" y=".2" width="5" height="2.600" rx=".8" fill="#e8eaec" stroke="#8a8e94" stroke-width=".7"/><path d="M10.300 6.800l5.400 8h-10.800z" fill="#fcd030" stroke="#d89810" stroke-width=".9" stroke-linejoin="round"/><path d="M10.300 9.500v2.800" stroke="#5a3a00" stroke-width="1.300"/><circle cx="10.300" cy="13.500" r=".7" fill="#5a3a00"/></svg></div>
<div class="ic" style="left:760px;top:75px"><svg width="16" height="16" viewBox="0 0 16 16"><rect x="1.5" y="1.300" width="11.500" height="13" rx="1" fill="#be8444" stroke="#96602a" stroke-width="1"/><path d="M2.5 2.500h4v11h-4z" fill="#cc9458"/><rect x="4.8" y=".2" width="5" height="2.600" rx=".8" fill="#e8eaec" stroke="#8a8e94" stroke-width=".7"/><circle cx="11.300" cy="11" r="4" fill="#fdfdf6" stroke="#2a7ad8" stroke-width="1.300"/><path d="M11.300 8.600v2.500l1.800 1" fill="none" stroke="#d08a1c" stroke-width="1"/></svg></div>
<div class="ic" style="left:782px;top:75px"><svg width="16" height="16" viewBox="0 0 16 16"><rect x="1.5" y="1.300" width="11.500" height="13" rx="1" fill="#be8444" stroke="#96602a" stroke-width="1"/><path d="M2.5 2.500h4v11h-4z" fill="#cc9458"/><rect x="4.8" y=".2" width="5" height="2.600" rx=".8" fill="#e8eaec" stroke="#8a8e94" stroke-width=".7"/><path d="M15.64 12.05L15.16 13.20L13.74 12.91L13.11 13.54L13.40 14.96L12.25 15.44L11.45 14.23L10.55 14.23L9.75 15.44L8.60 14.96L8.89 13.54L8.26 12.91L6.84 13.20L6.36 12.05L7.57 11.25L7.57 10.35L6.36 9.55L6.84 8.40L8.26 8.69L8.89 8.06L8.60 6.64L9.75 6.16L10.55 7.37L11.45 7.37L12.25 6.16L13.40 6.64L13.11 8.06L13.74 8.69L15.16 8.40L15.64 9.55L14.43 10.35L14.43 11.25z" fill="#b8babc" stroke="#6a6c6e" stroke-width=".7" stroke-linejoin="round"/><circle cx="11" cy="10.8" r="1.63" fill="#fff" stroke="#6a6c6e" stroke-width=".6"/></svg></div>
<div class="sep" style="left:60px;top:75px"></div>
<div class="sep" style="left:134px;top:75px"></div>
<div class="sep" style="left:308px;top:75px"></div>
<div class="sep" style="left:360px;top:75px"></div>
<div class="sep" style="left:478px;top:75px"></div>
<div class="sep" style="left:552px;top:75px"></div>
<div class="sep" style="left:626px;top:75px"></div>
<div class="sep" style="left:678px;top:75px"></div>
<div class="sep" style="left:730px;top:75px"></div>
<div id="hdr" class="abs"><span class="t" style="left:8px;top:3px">Подразделения</span></div>
<div class="ic" style="left:1179px;top:102px"><svg width="16" height="16" viewBox="0 0 16 16"><path d="M.5 2h4.300l1.200 1.500h5.500v9h-11z" fill="#f4c85c" stroke="#d8962a" stroke-width="1"/><path d="M1.500 4.800h9v1.200h-9z" fill="#fbe49a"/><path d="M1.500 7.500h5v4h-5z" fill="#f9d878"/><path d="M6.00 14.20v-2.90q0 -2.90 2.70 -2.90h4.41q2.70 0 2.70 2.90v2.90q-4.90 1.20 -9.80 0z" fill="#4a9af0" stroke="#1a5cc0" stroke-width="0.80"/><path d="M8.45 8.60h4.90l-2.45 3.60z" fill="#e6f1fd"/><circle cx="10.9" cy="5.80" r="3.00" fill="#ecbf92"/><path d="M7.90 6.70A3.00 3.00 0 1 1 13.90 6.70L13.06 6.70Q12.70 4.45 10.90 4.90Q9.10 4.45 8.74 6.70z" fill="#8a4a1c" stroke="#8a4a1c" stroke-width="0.40"/></svg></div>
<div class="abs" style="left:3px;top:125px;width:254px;height:760px;background:#fff"></div>
<div class="phead" style="left:3px;top:125px;width:254px"><span class="t" style="left:5px;top:3px">Список папок</span><svg class="abs" style="left:240px;top:6px" width="8" height="7" viewBox="0 0 8 7"><path d="M.5 0L7.5 7M7.5 0L.5 7" stroke="#000" stroke-width="1.5" fill="none"/></svg></div>
<div class="dotv" style="left:14px;top:153px;height:432px"></div>
<div class="dotv" style="left:33px;top:161px;height:41px"></div>
<div class="dotv" style="left:33px;top:225px;height:25px"></div>
<div class="dotv" style="left:33px;top:273px;height:73px"></div>
<div class="dotv" style="left:33px;top:369px;height:41px"></div>
<div class="dotv" style="left:33px;top:433px;height:41px"></div>
<div class="dotv" style="left:33px;top:497px;height:25px"></div>
<div class="dotv" style="left:33px;top:545px;height:25px"></div>
<div class="dotv" style="left:33px;top:593px;height:41px"></div>
<div class="doth" style="left:19px;top:153px;width:7px"></div>
<div class="pm" style="left:10px;top:149px"></div>
<div class="ic" style="left:26px;top:145px"><svg width="16" height="16" viewBox="0 0 16 16"><rect x="1.500" y=".5" width="12.500" height="14.500" rx="1.800" fill="#c98c4c" stroke="#a06428" stroke-width="1"/><rect x="3" y="2.200" width="9.500" height="3.200" fill="#eccb9c" stroke="#9a6228" stroke-width=".6"/><rect x="3" y="6.200" width="9.500" height="3.200" fill="#eccb9c" stroke="#9a6228" stroke-width=".6"/><rect x="3" y="10.200" width="9.500" height="3.200" fill="#eccb9c" stroke="#9a6228" stroke-width=".6"/><path d="M6 3.800h3.500M6 7.800h3.500M6 11.800h3.500" stroke="#5a8cd0" stroke-width="1.200"/></svg></div>
<span class="tt" style="left:46px;top:145px">Орг. структура</span>
<div class="doth" style="left:34px;top:169px;width:10px"></div>
<div class="ic" style="left:44px;top:161px"><svg width="16" height="16" viewBox="0 0 16 16"><path d="M.5 2h4.300l1.200 1.500h5.500v9h-11z" fill="#f4c85c" stroke="#d8962a" stroke-width="1"/><path d="M1.500 4.800h9v1.200h-9z" fill="#fbe49a"/><path d="M1.500 7.500h5v4h-5z" fill="#f9d878"/><path d="M6.00 14.20v-2.90q0 -2.90 2.70 -2.90h4.41q2.70 0 2.70 2.90v2.90q-4.90 1.20 -9.80 0z" fill="#4a9af0" stroke="#1a5cc0" stroke-width="0.80"/><path d="M8.45 8.60h4.90l-2.45 3.60z" fill="#e6f1fd"/><circle cx="10.9" cy="5.80" r="3.00" fill="#ecbf92"/><path d="M7.90 6.70A3.00 3.00 0 1 1 13.90 6.70L13.06 6.70Q12.70 4.45 10.90 4.90Q9.10 4.45 8.74 6.70z" fill="#8a4a1c" stroke="#8a4a1c" stroke-width="0.40"/></svg></div>
<div class="abs" style="left:63px;top:161px;width:83px;height:16px;background:#d4d0c8"></div>
<span class="tt" style="left:65px;top:161px">Подразделения</span>
<div class="doth" style="left:34px;top:185px;width:10px"></div>
<div class="ic" style="left:44px;top:177px"><svg width="16" height="16" viewBox="0 0 16 16"><path d="M.7 2.700h14.600v11.300h-2.800a1.100 1.100 0 0 0-2.200 0h-4.600a1.100 1.100 0 0 0-2.200 0h-2.800z" fill="#fbfdff" stroke="#2a7fd4" stroke-width="1.200" stroke-linejoin="round"/><rect x="2.200" y="4.200" width="5.200" height="6.300" fill="#a4cef6"/><circle cx="4.800" cy="6.200" r="1.800" fill="#ecbf92"/><path d="M3 6.500a1.800 1.800 0 1 1 3.600 0q-.4-1.200-1.800-1.100q-1.400-.1-1.800 1.100z" fill="#8a4a1c" stroke="#8a4a1c" stroke-width=".3"/><path d="M2.300 10.500v-.9q0-1.500 1.500-1.500h2q1.500 0 1.500 1.500v.9z" fill="#2f7fdc"/><path d="M9 5.200h5M9 7.500h5M9 9.800h4" stroke="#7a9cc8" stroke-width="1.100"/></svg></div>
<span class="tt" style="left:65px;top:177px">Должности</span>
<div class="doth" style="left:34px;top:201px;width:10px"></div>
<div class="ic" style="left:44px;top:193px"><svg width="16" height="16" viewBox="0 0 16 16"><path d="M6.25 10.53v-2.75q0 -2.75 2.56 -2.75h4.19q2.56 0 2.56 2.75v2.75q-4.66 1.14 -9.31 0z" fill="#7cc24e" stroke="#3f8a24" stroke-width="0.76"/><path d="M8.57 5.21h4.66l-2.33 3.42z" fill="#e4f5d8"/><circle cx="10.9" cy="2.55" r="2.85" fill="#ecbf92"/><path d="M8.05 3.40A2.85 2.85 0 1 1 13.75 3.40L12.95 3.40Q12.61 1.27 10.90 1.69Q9.19 1.27 8.85 3.40z" fill="#8a4a1c" stroke="#8a4a1c" stroke-width="0.38"/><path d="M0.10 13.17v-2.84q0 -2.84 2.64 -2.84h4.32q2.64 0 2.64 2.84v2.84q-4.80 1.18 -9.60 0z" fill="#4a9af0" stroke="#1a5cc0" stroke-width="0.78"/><path d="M2.50 7.68h4.80l-2.40 3.52z" fill="#e6f1fd"/><circle cx="4.9" cy="4.94" r="2.94" fill="#ecbf92"/><path d="M1.96 5.82A2.94 2.94 0 1 1 7.84 5.82L7.02 5.82Q6.66 3.62 4.90 4.06Q3.14 3.62 2.78 5.82z" fill="#8a4a1c" stroke="#8a4a1c" stroke-width="0.39"/></svg></div>
<span class="tt" style="left:65px;top:193px">Сотрудники</span>
<div class="doth" style="left:19px;top:217px;width:7px"></div>
<div class="pm" style="left:10px;top:213px"></div>
<div class="ic" style="left:26px;top:209px"><svg width="16" height="16" viewBox="0 0 16 16"><path d="M.4 15v-3q0-3 3-3.600l1.800-.4h2.600l1.800.4q3 .6 3 3.600v3q-6.100 1-12.200 0z" fill="#8a8e94" stroke="#55595e" stroke-width=".8"/><path d="M4.800 8.200l1.700 4l1.700-4z" fill="#fff"/><path d="M6 8.600h1l.4 3.400l-.9 1.200l-.9-1.200z" fill="#33363a"/><circle cx="6.500" cy="4.200" r="3.200" fill="#e8b888"/><path d="M3.300 4a3.200 3.200 0 0 1 6.400 0q-1.200-1.500-3.200-1.400q-2-.1-3.200 1.400z" fill="#8a4a1c"/><rect x="3.600" y="3.800" width="5.800" height="1.700" rx=".7" fill="#1e1e20"/></svg></div>
<span class="tt" style="left:46px;top:209px">Управление</span>
<div class="doth" style="left:34px;top:233px;width:10px"></div>
<div class="ic" style="left:44px;top:225px"><svg width="16" height="16" viewBox="0 0 16 16"><path d="M2.800 .7h8.200l3.600 3.600v9.900h-11.800z" fill="#fff" stroke="#b4bcc8" stroke-width="1"/><path d="M11 .7v3.600h3.600" fill="#e8eef6" stroke="#b4bcc8" stroke-width=".8"/><path d="M7.500 5.500h5.500M8.500 7.700h4.500M8.500 9.900h4.500M9 12h3.500" stroke="#2b7de0" stroke-width="1.200" stroke-dasharray="1.600 .7"/><path d="M0.04 13.80v-2.70q0 -2.70 2.51 -2.70h4.10q2.51 0 2.51 2.70v2.70q-4.56 1.12 -9.11 0z" fill="#5a6a80" stroke="#35404e" stroke-width="0.74"/><path d="M2.32 8.59h4.56l-2.28 3.34z" fill="#dfe6ee"/><path d="M4.04 8.97h1.12l-0.56 3.24z" fill="#e0601c"/><circle cx="4.6" cy="5.99" r="2.79" fill="#ecbf92"/><path d="M1.81 6.83A2.79 2.79 0 1 1 7.39 6.83L6.61 6.83Q6.27 4.73 4.60 5.15Q2.93 4.73 2.59 6.83z" fill="#8a4a1c" stroke="#8a4a1c" stroke-width="0.37"/></svg></div>
<span class="tt" style="left:65px;top:225px">Роли</span>
<div class="doth" style="left:34px;top:249px;width:10px"></div>
<div class="ic" style="left:44px;top:241px"><svg width="16" height="16" viewBox="0 0 16 16"><rect x="2.500" y=".5" width="12.800" height="14" rx="1" fill="#3f8fe4" stroke="#1f66bd" stroke-width="1"/><rect x="5" y="2" width="9" height="11.500" fill="#dcebfb"/><path d="M.8 2.500h3M.8 5h3M.8 7.500h3M.8 10h3M.8 12.500h3" stroke="#5f8fc2" stroke-width="1.100"/><path d="M6.00 13.17v-2.84q0 -2.84 2.64 -2.84h4.32q2.64 0 2.64 2.84v2.84q-4.80 1.18 -9.60 0z" fill="#4a9af0" stroke="#1a5cc0" stroke-width="0.78"/><path d="M8.40 7.68h4.80l-2.40 3.52z" fill="#e6f1fd"/><circle cx="10.8" cy="4.94" r="2.94" fill="#ecbf92"/><path d="M7.86 5.82A2.94 2.94 0 1 1 13.74 5.82L12.92 5.82Q12.56 3.62 10.80 4.06Q9.04 3.62 8.68 5.82z" fill="#8a4a1c" stroke="#8a4a1c" stroke-width="0.39"/></svg></div>
<span class="tt" style="left:65px;top:241px">Ответственности</span>
<div class="doth" style="left:19px;top:265px;width:7px"></div>
<div class="pm" style="left:10px;top:261px"></div>
<div class="ic" style="left:25px;top:257px"><svg width="16" height="16" viewBox="0 0 16 16"><path d="M.5 5.500l2-4h11l2 4v9h-15z" fill="#b4b7bb" stroke="#787c82" stroke-width="1"/><path d="M2.800 2.500h10.400l1 3h-12.400z" fill="#6e7278"/><path d="M3.500 2.700l2 2l1.500-2l2 2l1.500-2l2 2v.8h-9z" fill="#f0cc30"/><rect x="1.500" y="6.500" width="13" height="7" fill="#cfd2d5" stroke="#8a8e94" stroke-width=".6"/><rect x="5" y="9" width="6" height="2" fill="#7c8086"/></svg></div>
<span class="tt" style="left:46px;top:257px">Объекты АС</span>
<div class="doth" style="left:34px;top:281px;width:10px"></div>
<div class="ic" style="left:44px;top:273px"><svg width="16" height="16" viewBox="0 0 16 16"><path d="M.5 4l2-3.500h10.500l2 3.500v6h-14.500z" fill="#b8bcc0" stroke="#70747a" stroke-width="1"/><rect x="2" y="3.500" width="11.500" height="5" fill="#e4e6e8" stroke="#8a8e94" stroke-width=".5"/><path d="M3 5.500h5M3 7h4" stroke="#9aa0a8" stroke-width=".7"/><path d="M6.68 12.69v-2.26q0 -2.26 2.10 -2.26h3.44q2.10 0 2.10 2.26v2.26q-3.82 0.94 -7.64 0z" fill="#404448" stroke="#222426" stroke-width="0.62"/><path d="M8.59 8.32h3.82l-1.91 2.80z" fill="#fff"/><path d="M10.03 8.64h0.94l-0.47 2.71z" fill="#222"/><circle cx="10.5" cy="6.14" r="2.34" fill="#ecbf92"/><path d="M8.16 6.84A2.34 2.34 0 1 1 12.84 6.84L12.18 6.84Q11.90 5.09 10.50 5.44Q9.10 5.09 8.82 6.84z" fill="#8a4a1c" stroke="#8a4a1c" stroke-width="0.31"/></svg></div>
<span class="tt" style="left:65px;top:273px">Агенты и ресурсы</span>
<div class="doth" style="left:34px;top:297px;width:10px"></div>
<div class="ic" style="left:44px;top:289px"><svg width="16" height="16" viewBox="0 0 16 16"><path d="M3.88 9.19v-2.26q0 -2.26 2.10 -2.26h3.44q2.10 0 2.10 2.26v2.26q-3.82 0.94 -7.64 0z" fill="#4a9af0" stroke="#1a5cc0" stroke-width="0.62"/><path d="M5.79 4.82h3.82l-1.91 2.80z" fill="#e6f1fd"/><circle cx="7.7" cy="2.64" r="2.34" fill="#ecbf92"/><path d="M5.36 3.34A2.34 2.34 0 1 1 10.04 3.34L9.38 3.34Q9.10 1.59 7.70 1.94Q6.30 1.59 6.02 3.34z" fill="#8a4a1c" stroke="#8a4a1c" stroke-width="0.31"/><path d="M.5 9.500l1.800-2h11l1.800 2v5.700h-14.600z" fill="#d49a58" stroke="#b87428" stroke-width=".9"/><path d="M.5 9.800h14.600" stroke="#b87428" stroke-width=".8"/><path d="M1.200 10.500h13.200v1h-13.200z" fill="#e8b878"/><rect x="4.800" y="11.600" width="6" height="1.800" fill="#eef4fa" stroke="#a06428" stroke-width=".4"/></svg></div>
<span class="tt" style="left:65px;top:289px">Учетные записи</span>
<div class="doth" style="left:34px;top:313px;width:10px"></div>
<div class="ic" style="left:44px;top:305px"><svg width="16" height="16" viewBox="0 0 16 16"><path d="M7.87 7.98v-2.03q0 -2.03 1.89 -2.03h3.09q1.89 0 1.89 2.03v2.03q-3.43 0.84 -6.86 0z" fill="#7cc24e" stroke="#3f8a24" stroke-width="0.56"/><path d="M9.59 4.06h3.43l-1.72 2.52z" fill="#e4f5d8"/><circle cx="11.3" cy="2.10" r="2.10" fill="#ecbf92"/><path d="M9.20 2.73A2.10 2.10 0 1 1 13.40 2.73L12.81 2.73Q12.56 1.15 11.30 1.47Q10.04 1.15 9.79 2.73z" fill="#8a4a1c" stroke="#8a4a1c" stroke-width="0.28"/><path d="M3.12 9.35v-2.17q0 -2.17 2.02 -2.17h3.31q2.02 0 2.02 2.17v2.17q-3.68 0.90 -7.35 0z" fill="#4a9af0" stroke="#1a5cc0" stroke-width="0.60"/><path d="M4.96 5.15h3.68l-1.84 2.70z" fill="#e6f1fd"/><circle cx="6.8" cy="3.05" r="2.25" fill="#ecbf92"/><path d="M4.55 3.72A2.25 2.25 0 1 1 9.05 3.72L8.42 3.72Q8.15 2.04 6.80 2.38Q5.45 2.04 5.18 3.72z" fill="#8a4a1c" stroke="#8a4a1c" stroke-width="0.30"/><path d="M.5 9.500l1.800-2h11l1.800 2v5.700h-14.600z" fill="#d49a58" stroke="#b87428" stroke-width=".9"/><path d="M.5 9.800h14.600" stroke="#b87428" stroke-width=".8"/><path d="M1.200 10.500h13.200v1h-13.200z" fill="#e8b878"/><rect x="4.800" y="11.600" width="6" height="1.800" fill="#eef4fa" stroke="#a06428" stroke-width=".4"/></svg></div>
<span class="tt" style="left:65px;top:305px">Группы учетных записей</span>
<div class="doth" style="left:34px;top:329px;width:10px"></div>
<div class="ic" style="left:44px;top:321px"><svg width="16" height="16" viewBox="0 0 16 16"><rect x=".8" y="2.500" width="14.700" height="11" fill="#fff8ec" stroke="#e8a040" stroke-width="1.100"/><rect x="2.800" y="4.500" width="10.700" height="7" fill="#fdf0dc" stroke="#eeb868" stroke-width=".8"/><path d="M4.500 6.500h3" stroke="#8a8e94" stroke-width="1"/><rect x="9.500" y="5.800" width="2.200" height="2" fill="#9cc4f0"/><path d="M5 10q1.500-1.800 3-.5t3.500-.5" fill="none" stroke="#2a6ae0" stroke-width="1.100"/></svg></div>
<span class="tt" style="left:65px;top:321px">Сертификаты</span>
<div class="doth" style="left:34px;top:345px;width:10px"></div>
<div class="ic" style="left:44px;top:337px"><svg width="16" height="16" viewBox="0 0 16 16"><path d="M2.800 4.200h3.200q-1.100-3.400 1.500-3.400t1.500 3.400h3.200v3q3.200-1.100 3.200 1.400t-3.200 1.400v3.800h-3.300q1.100-2.600-1.400-2.600t-1.400 2.600h-3.300v-3.400q-2.400 1.100-2.400-1.500t2.400-1.500z" fill="#fcd440" stroke="#e8962a" stroke-width="1"/><circle cx="7.500" cy="8.500" r="2.600" fill="#f8b830" opacity=".7"/></svg></div>
<span class="tt" style="left:65px;top:337px">Организационные единицы</span>
<div class="doth" style="left:19px;top:361px;width:7px"></div>
<div class="pm" style="left:10px;top:357px"></div>
<div class="ic" style="left:25px;top:353px"><svg width="16" height="16" viewBox="0 0 16 16"><rect x=".5" y="1.500" width="15" height="7" rx="1" fill="#f4f5f6" stroke="#7a7e84" stroke-width="1"/><path d="M2.500 4h3l-1.500 2.500zM6.500 4h3l-1.500 2.500zM10.500 4h3l-1.500 2.500z" fill="#2a2c30"/><path d="M8 8.500v4" stroke="#6a6e74" stroke-width="1.600"/><path d="M1 13h14" stroke="#3a3c40" stroke-width="1.600"/><path d="M6 11.200h4l-.5 2.600h-3z" fill="#f4b428" stroke="#c88210" stroke-width=".5"/></svg></div>
<span class="tt" style="left:46px;top:353px">Сетевые сущности</span>
<div class="doth" style="left:34px;top:377px;width:10px"></div>
<div class="ic" style="left:44px;top:369px"><svg width="16" height="16" viewBox="0 0 16 16"><path d="M1.300 14.700l2.500-2.500M12.200 3.800l2.600-2.600" stroke="#8a9ab0" stroke-width="1.300"/><path d="M3 8.800l5-5q2.600-1.800 4.400 0q1.800 1.800 0 4.400l-5 5q-2.600 1.800-4.400 0q-1.800-1.800 0-4.400z" fill="#5cb0f8" stroke="#2a80d8" stroke-width=".9"/><path d="M4.800 7l4.200 4.200M6.800 5l4.200 4.200M8.800 3.300l3.900 3.900" stroke="#d4ecfe" stroke-width="1"/></svg></div>
<span class="tt" style="left:65px;top:369px">Сети</span>
<div class="doth" style="left:34px;top:393px;width:10px"></div>
<div class="ic" style="left:44px;top:385px"><svg width="16" height="16" viewBox="0 0 16 16"><rect x="3.300" y=".5" width="8.400" height="5.200" fill="#98d428" stroke="#5aa010" stroke-width="1"/><rect x="5" y="2" width="5" height="2.200" fill="#c8ec80"/><path d="M7.500 5.700v2M2.500 9.500v-1.800h10v1.800M7.500 7.700v1.800" stroke="#a08868" stroke-width=".9" fill="none"/><rect x=".4" y="9.400" width="14.600" height="4.400" fill="#2a92e4" stroke="#1a6cc0" stroke-width=".8"/><rect x="1.800" y="10.700" width="1.800" height="1.800" fill="#e8f4fe"/><rect x="6.800" y="10.700" width="1.800" height="1.800" fill="#e8f4fe"/><rect x="11.800" y="10.700" width="1.800" height="1.800" fill="#e8f4fe"/></svg></div>
<span class="tt" style="left:65px;top:385px">Сетевые группы</span>
<div class="doth" style="left:34px;top:409px;width:10px"></div>
<div class="ic" style="left:44px;top:401px"><svg width="16" height="16" viewBox="0 0 16 16"><path d="M14.55 9.40L13.83 11.14L11.67 10.70L10.70 11.67L11.14 13.83L9.40 14.55L8.18 12.71L6.82 12.71L5.60 14.55L3.86 13.83L4.30 11.67L3.33 10.70L1.17 11.14L0.45 9.40L2.29 8.18L2.29 6.82L0.45 5.60L1.17 3.86L3.33 4.30L4.30 3.33L3.86 1.17L5.60 0.45L6.82 2.29L8.18 2.29L9.40 0.45L11.14 1.17L10.70 3.33L11.67 4.30L13.83 3.86L14.55 5.60L12.71 6.82L12.71 8.18z" fill="#b0b2b4" stroke="#707274" stroke-width=".7" stroke-linejoin="round"/><circle cx="7.5" cy="7.5" r="2.48" fill="#fff" stroke="#707274" stroke-width=".6"/></svg></div>
<span class="tt" style="left:65px;top:401px">Сервисы</span>
<div class="doth" style="left:19px;top:425px;width:7px"></div>
<div class="pm" style="left:10px;top:421px"></div>
<div class="ic" style="left:25px;top:417px"><svg width="16" height="16" viewBox="0 0 16 16"><rect x="6.400" y="6" width="2.400" height="8.200" fill="#8cd020" stroke="#5a9a10" stroke-width=".6"/><rect x=".3" y="1.500" width="4.200" height="2.200" fill="#8cd020" stroke="#5a9a10" stroke-width=".6"/><rect x="10.800" y="1.500" width="4.200" height="2.200" fill="#8cd020" stroke="#5a9a10" stroke-width=".6"/><path d="M4.800 1.200h5.600l-2.800 4.200z" fill="#f8c038" stroke="#d89010" stroke-width=".7"/></svg></div>
<span class="tt" style="left:46px;top:417px">Сетевые взаимодействия</span>
<div class="doth" style="left:34px;top:441px;width:10px"></div>
<div class="ic" style="left:44px;top:433px"><svg width="16" height="16" viewBox="0 0 16 16"><path d="M1.800 3.500v4q0 2.500 2.500 2.500h3" fill="none" stroke="#a4a8ac" stroke-width="3"/><path d="M13.800 14.500v-6q0-3-3-3" fill="none" stroke="#a4a8ac" stroke-width="3"/><path d="M11 15v-4q0-2.200-2.200-2.200h-1.300q-3 0-3-3v-.8h-2.700l4.200-4.500l4.200 4.500h-2.700v.6q0 .6.600.6h.9q4.800 0 4.800 4.800v4z" fill="#94d424" stroke="#4a9010" stroke-width=".9" stroke-linejoin="round"/></svg></div>
<span class="tt" style="left:65px;top:433px">Маршруты</span>
<div class="doth" style="left:34px;top:457px;width:10px"></div>
<div class="ic" style="left:44px;top:449px"><svg width="16" height="16" viewBox="0 0 16 16"><path d="M9.44 6.59L8.99 7.70L7.63 7.42L7.02 8.03L7.30 9.39L6.19 9.84L5.43 8.68L4.57 8.68L3.81 9.84L2.70 9.39L2.98 8.03L2.37 7.42L1.01 7.70L0.56 6.59L1.72 5.83L1.72 4.97L0.56 4.21L1.01 3.10L2.37 3.38L2.98 2.77L2.70 1.41L3.81 0.96L4.57 2.12L5.43 2.12L6.19 0.96L7.30 1.41L7.02 2.77L7.63 3.38L8.99 3.10L9.44 4.21L8.28 4.97L8.28 5.83z" fill="#b0b2b4" stroke="#707274" stroke-width=".7" stroke-linejoin="round"/><circle cx="5" cy="5.4" r="1.56" fill="#fff" stroke="#707274" stroke-width=".6"/><path d="M16.05 11.94L15.61 13.00L14.31 12.73L13.73 13.31L14.00 14.61L12.94 15.05L12.21 13.94L11.39 13.94L10.66 15.05L9.60 14.61L9.87 13.31L9.29 12.73L7.99 13.00L7.55 11.94L8.66 11.21L8.66 10.39L7.55 9.66L7.99 8.60L9.29 8.87L9.87 8.29L9.60 6.99L10.66 6.55L11.39 7.66L12.21 7.66L12.94 6.55L14.00 6.99L13.73 8.29L14.31 8.87L15.61 8.60L16.05 9.66L14.94 10.39L14.94 11.21z" fill="#b0b2b4" stroke="#707274" stroke-width=".7" stroke-linejoin="round"/><circle cx="11.8" cy="10.8" r="1.50" fill="#fff" stroke="#707274" stroke-width=".6"/><rect x="0.4" y="9.2" width="6" height="6.5" fill="#d8f0f8" stroke="#1a88b8" stroke-width=".9"/><path d="M0.4 11.37h6M0.4 13.53h6M2.80 9.2v6.5" stroke="#1a88b8" stroke-width=".7"/></svg></div>
<span class="tt" style="left:65px;top:449px">Технологические правила</span>
<div class="doth" style="left:34px;top:473px;width:10px"></div>
<div class="ic" style="left:44px;top:465px"><svg width="16" height="16" viewBox="0 0 16 16"><path d="M.5 1h15.200q0 2.500-5.200 6.500v3.500l-4 2v-5.500q-6-4-6-6.500z" fill="#a8d8fa" stroke="#2a88d8" stroke-width="1"/><ellipse cx="8.100" cy="1.800" rx="6.600" ry="1.300" fill="#e0f2fe" stroke="#5aa8e8" stroke-width=".6"/><rect x="9.8" y="8.3" width="6" height="7" fill="#d8f0f8" stroke="#1a88b8" stroke-width=".9"/><path d="M9.8 10.63h6M9.8 12.97h6M12.20 8.3v7" stroke="#1a88b8" stroke-width=".7"/></svg></div>
<span class="tt" style="left:65px;top:465px">Правила фильтрации</span>
<div class="doth" style="left:19px;top:489px;width:7px"></div>
<div class="pm" style="left:10px;top:485px"></div>
<div class="ic" style="left:25px;top:481px"><svg width="16" height="16" viewBox="0 0 16 16"><path d="M1.300 1.700v11.600" stroke="#6a6e74" stroke-width="1.400"/><path d="M.6 1.700h2" stroke="#6a6e74" stroke-width="1"/><rect x="3" y="5" width="13" height="7" fill="#5aa850" stroke="#2a7030" stroke-width=".9"/><rect x="4.500" y="6.500" width="3" height="2.500" fill="#2c3034"/><rect x="9" y="6.500" width="3" height="2.500" fill="#8a8e94"/><rect x="13" y="6.500" width="1.800" height="3.500" fill="#c8d0c4"/><path d="M4.500 12.800h7" stroke="#d8b030" stroke-width="1.300"/></svg></div>
<span class="tt" style="left:46px;top:481px">Объекты ПАК</span>
<div class="doth" style="left:34px;top:505px;width:10px"></div>
<div class="ic" style="left:44px;top:497px"><svg width="16" height="16" viewBox="0 0 16 16"><rect x="7.800" y=".5" width="7.600" height="12.500" fill="#dce4f0" stroke="#8098b8" stroke-width=".9"/><path d="M9.500 2.500h4.500M9.500 4.500h4.500" stroke="#8098b8" stroke-width=".8"/><rect x="12.300" y="8" width="1.800" height="1.800" fill="#4cc030"/><rect x=".5" y="3.800" width="10.500" height="8" rx=".8" fill="#3a8ee4" stroke="#1f62b8" stroke-width="1"/><rect x="2" y="5.300" width="7.500" height="5" fill="#7cc4fa"/><path d="M3 14.300h6v-1h-1.500v-1.500h-3v1.500h-1.500z" fill="#8a98ac"/></svg></div>
<span class="tt" style="left:65px;top:497px">Компьютеры ПАК</span>
<div class="doth" style="left:34px;top:521px;width:10px"></div>
<div class="ic" style="left:44px;top:513px"><svg width="16" height="16" viewBox="0 0 16 16"><rect x=".7" y=".7" width="14.800" height="13.600" fill="#fff" stroke="#2a80d0" stroke-width="1.400"/><rect x="2.700" y="2.700" width="10.800" height="2.600" fill="#a8d0f4" stroke="#5aa0e0" stroke-width=".5"/><rect x="2.700" y="7.800" width="3.500" height="4.200" fill="#5aa6f0" stroke="#2a80d0" stroke-width=".6"/><rect x="7.800" y="7.800" width="5.700" height="4.200" fill="#f4f0ec" stroke="#c8a890" stroke-width=".7"/></svg></div>
<span class="tt" style="left:65px;top:513px">Шаблоны ПАК</span>
<div class="doth" style="left:19px;top:537px;width:7px"></div>
<div class="pm" style="left:10px;top:533px"></div>
<div class="ic" style="left:26px;top:529px"><svg width="16" height="16" viewBox="0 0 16 16"><path d="M7.500 2h4l2.500 2.500v8.500h-6.500z" fill="#fff" stroke="#b8bcc4" stroke-width=".9"/><path d="M11.500 2v2.500h2.500" fill="#e8ecf0" stroke="#b8bcc4" stroke-width=".7"/><path d="M.5 1.800l5.500-1.300l2.500 1.500v12l-2.500 1l-5.500-1.500z" fill="#fbd458" stroke="#e0a428" stroke-width=".9"/><path d="M6 .8v14" stroke="#e8b030" stroke-width=".9"/><path d="M1.300 2.800l4-1v11.500l-4-1z" fill="#fde898"/></svg></div>
<span class="tt" style="left:46px;top:529px">Документы</span>
<div class="doth" style="left:34px;top:553px;width:10px"></div>
<div class="ic" style="left:44px;top:545px"><svg width="16" height="16" viewBox="0 0 16 16"><rect x="0.5" y="1.300" width="11.500" height="13" rx="1" fill="#be8444" stroke="#96602a" stroke-width="1"/><path d="M1.5 2.500h4v11h-4z" fill="#cc9458"/><rect x="3.8" y=".2" width="5" height="2.600" rx=".8" fill="#e8eaec" stroke="#8a8e94" stroke-width=".7"/><path d="M6.200 3.800h6l3.300 3.300v7h-9.300z" fill="#f8fbff" stroke="#2a88dc" stroke-width="1.200"/><path d="M12.200 3.800v3.300h3.300" fill="#cfe4fa" stroke="#2a88dc" stroke-width=".8"/><path d="M7.800 9.500h6M7.800 11.500h6" stroke="#a8ccf0" stroke-width="1"/></svg></div>
<span class="tt" style="left:65px;top:545px">Журнал заявок</span>
<div class="doth" style="left:34px;top:569px;width:10px"></div>
<div class="ic" style="left:44px;top:561px"><svg width="16" height="16" viewBox="0 0 16 16"><path d="M.5 .5h5l2.500 2.500v8.500h-7.500z" fill="#fbfbfb" stroke="#b4b6b8" stroke-width=".9"/><path d="M3 2h5.500l2.500 2.500v8.500h-8z" fill="#fbfbfb" stroke="#b4b6b8" stroke-width=".9"/><path d="M6 3.800h6l3.300 3.300v7.400h-9.300z" fill="#fff" stroke="#a8aaac" stroke-width=".9"/><path d="M12 3.800v3.300h3.300" fill="#eceded" stroke="#a8aaac" stroke-width=".7"/><path d="M7.500 9.500h5.500M7.500 11.500h5.500" stroke="#e0e0e0" stroke-width=".8"/></svg></div>
<span class="tt" style="left:65px;top:561px">Инструкции</span>
<div class="doth" style="left:19px;top:585px;width:7px"></div>
<div class="pm" style="left:10px;top:581px"></div>
<div class="ic" style="left:26px;top:577px"><svg width="16" height="16" viewBox="0 0 16 16"><rect x=".5" y="1.300" width="12.500" height="13" rx="1.200" fill="#be8444" stroke="#96602a" stroke-width="1"/><path d="M1.500 2.500h5v11h-5z" fill="#cc9458"/><rect x="4" y=".2" width="5.500" height="2.600" rx=".8" fill="#eceef0" stroke="#8a8e94" stroke-width=".7"/></svg></div>
<span class="tt" style="left:46px;top:577px">Журналы</span>
<div class="doth" style="left:34px;top:601px;width:10px"></div>
<div class="ic" style="left:44px;top:593px"><svg width="16" height="16" viewBox="0 0 16 16"><rect x="1.5" y="1.300" width="11.500" height="13" rx="1" fill="#be8444" stroke="#96602a" stroke-width="1"/><path d="M2.5 2.500h4v11h-4z" fill="#cc9458"/><rect x="4.8" y=".2" width="5" height="2.600" rx=".8" fill="#e8eaec" stroke="#8a8e94" stroke-width=".7"/><path d="M10.300 6.800l5.400 8h-10.800z" fill="#fcd030" stroke="#d89810" stroke-width=".9" stroke-linejoin="round"/><path d="M10.300 9.500v2.800" stroke="#5a3a00" stroke-width="1.300"/><circle cx="10.300" cy="13.500" r=".7" fill="#5a3a00"/></svg></div>
<span class="tt" style="left:65px;top:593px">Журнал несоответствий</span>
<div class="doth" style="left:34px;top:617px;width:10px"></div>
<div class="ic" style="left:44px;top:609px"><svg width="16" height="16" viewBox="0 0 16 16"><rect x="1.5" y="1.300" width="11.500" height="13" rx="1" fill="#be8444" stroke="#96602a" stroke-width="1"/><path d="M2.5 2.500h4v11h-4z" fill="#cc9458"/><rect x="4.8" y=".2" width="5" height="2.600" rx=".8" fill="#e8eaec" stroke="#8a8e94" stroke-width=".7"/><circle cx="11.300" cy="11" r="4" fill="#fdfdf6" stroke="#2a7ad8" stroke-width="1.300"/><path d="M11.300 8.600v2.500l1.800 1" fill="none" stroke="#d08a1c" stroke-width="1"/></svg></div>
<span class="tt" style="left:65px;top:609px">Журнал событий</span>
<div class="doth" style="left:34px;top:633px;width:10px"></div>
<div class="ic" style="left:44px;top:625px"><svg width="16" height="16" viewBox="0 0 16 16"><rect x="1.5" y="1.300" width="11.500" height="13" rx="1" fill="#be8444" stroke="#96602a" stroke-width="1"/><path d="M2.5 2.500h4v11h-4z" fill="#cc9458"/><rect x="4.8" y=".2" width="5" height="2.600" rx=".8" fill="#e8eaec" stroke="#8a8e94" stroke-width=".7"/><path d="M15.64 12.05L15.16 13.20L13.74 12.91L13.11 13.54L13.40 14.96L12.25 15.44L11.45 14.23L10.55 14.23L9.75 15.44L8.60 14.96L8.89 13.54L8.26 12.91L6.84 13.20L6.36 12.05L7.57 11.25L7.57 10.35L6.36 9.55L6.84 8.40L8.26 8.69L8.89 8.06L8.60 6.64L9.75 6.16L10.55 7.37L11.45 7.37L12.25 6.16L13.40 6.64L13.11 8.06L13.74 8.69L15.16 8.40L15.64 9.55L14.43 10.35L14.43 11.25z" fill="#b8babc" stroke="#6a6c6e" stroke-width=".7" stroke-linejoin="round"/><circle cx="11" cy="10.8" r="1.63" fill="#fff" stroke="#6a6c6e" stroke-width=".6"/></svg></div>
<span class="tt" style="left:65px;top:625px">Системный журнал</span>
<div class="abs" style="left:257px;top:122px;width:669px;height:763px;background:linear-gradient(90deg,#dddbd6 0%,#dddbd6 1%,#f8f5f1 99%)"></div>
<div class="abs" style="left:261px;top:125px;width:659px;height:554px;background:#d9d6d0;border:1px solid #8a8684;border-left-color:#808080;border-top-color:#808080;box-shadow:inset 1px 1px 0 #404040"></div>
<svg class="abs" style="left:263px;top:127px" width="655" height="21" viewBox="0 0 655 21"><g fill="#5c5c5c"><rect x="6.300" y="6.500" width="1.200" height="6"/><path d="M12.300 6.500v6l-4-3z"/><path d="M27.500 6.500v6l-4.300-3z"/><path d="M40.500 6.500v6l4.300-3z"/><path d="M55 6.500v6l4-3z"/><rect x="60" y="6.500" width="1.200" height="6"/></g><path d="M0 18.500H67M233 18.500H655" fill="none" stroke="#fff" stroke-width="1"/><path d="M0 19.500H68M232 19.500H655" fill="none" stroke="#000" stroke-width="1"/><path d="M228.300 12.500L233.600 4.500H369.500L377.500 19.500H232z" fill="#d9d6d0" stroke="#000" stroke-width="1"/><path d="M67.500 20.500L76 4.500H223.600L232.500 20.500z" fill="#fff"/><path d="M67.500 20L76 4.500H223.600L232.500 20" fill="none" stroke="#000" stroke-width="1"/></svg>
<span class="t mss" style="left:341px;top:130px;font-weight:bold">Иерархия подразделений</span>
<span class="t mss" style="left:506px;top:130px">Список подразделений</span>
<div class="sunk" style="left:266px;top:148px;width:651px;height:528px;background:#fff"><div class="in">
<div class="gh" style="left:0px;top:0;width:200px;padding-left:6px">Название</div>
<div class="gh" style="left:200px;top:0;width:200px;padding-left:7px">Директор</div>
<div class="gh" style="left:400px;top:0;width:200px;padding-left:7px">Категория подразделения</div>
<div class="gh" style="left:600px;top:0;width:60px;padding-left:7px">Уровень</div>
<div class="row" style="top:17px;width:660px;">
<div class="pm" style="left:6px;top:6px"></div>
<div class="ic" style="left:23px;top:2px"><svg width="16" height="16" viewBox="0 0 16 16"><path d="M.5 2h4.300l1.200 1.500h5.500v9h-11z" fill="#f4c85c" stroke="#d8962a" stroke-width="1"/><path d="M1.500 4.800h9v1.200h-9z" fill="#fbe49a"/><path d="M1.500 7.500h5v4h-5z" fill="#f9d878"/><path d="M6.00 14.20v-2.90q0 -2.90 2.70 -2.90h4.41q2.70 0 2.70 2.90v2.90q-4.90 1.20 -9.80 0z" fill="#4a9af0" stroke="#1a5cc0" stroke-width="0.80"/><path d="M8.45 8.60h4.90l-2.45 3.60z" fill="#e6f1fd"/><circle cx="10.9" cy="5.80" r="3.00" fill="#ecbf92"/><path d="M7.90 6.70A3.00 3.00 0 1 1 13.90 6.70L13.06 6.70Q12.70 4.45 10.90 4.90Q9.10 4.45 8.74 6.70z" fill="#8a4a1c" stroke="#8a4a1c" stroke-width="0.40"/></svg></div>
<div class="cell" style="left:46px;width:153px">ГК &quot;Информзащита&quot;</div>
<div class="cell" style="left:204px;width:195px"></div>
<div class="cell" style="left:404px;width:195px"></div>
<div class="cell" style="left:604px;width:60px;letter-spacing:-0.35px">Юридиче</div>
</div>
<div class="row" style="top:38px;width:660px;">
<div class="pm" style="left:27px;top:6px"></div>
<div class="ic" style="left:44px;top:2px"><svg width="16" height="16" viewBox="0 0 16 16"><path d="M.5 2h4.300l1.200 1.500h5.500v9h-11z" fill="#f4c85c" stroke="#d8962a" stroke-width="1"/><path d="M1.500 4.800h9v1.200h-9z" fill="#fbe49a"/><path d="M1.500 7.500h5v4h-5z" fill="#f9d878"/><path d="M6.00 14.20v-2.90q0 -2.90 2.70 -2.90h4.41q2.70 0 2.70 2.90v2.90q-4.90 1.20 -9.80 0z" fill="#4a9af0" stroke="#1a5cc0" stroke-width="0.80"/><path d="M8.45 8.60h4.90l-2.45 3.60z" fill="#e6f1fd"/><circle cx="10.9" cy="5.80" r="3.00" fill="#ecbf92"/><path d="M7.90 6.70A3.00 3.00 0 1 1 13.90 6.70L13.06 6.70Q12.70 4.45 10.90 4.90Q9.10 4.45 8.74 6.70z" fill="#8a4a1c" stroke="#8a4a1c" stroke-width="0.40"/></svg></div>
<div class="cell" style="left:67px;width:132px">Трастверс</div>
<div class="cell" style="left:204px;width:195px"></div>
<div class="cell" style="left:404px;width:195px"></div>
<div class="cell" style="left:604px;width:60px;letter-spacing:-0.35px">Юридиче</div>
</div>
<div class="row" style="top:59px;width:660px;">
<div class="pm plus" style="left:48px;top:6px"></div>
<div class="ic" style="left:65px;top:2px"><svg width="16" height="16" viewBox="0 0 16 16"><path d="M.5 2h4.300l1.200 1.500h5.500v9h-11z" fill="#f4c85c" stroke="#d8962a" stroke-width="1"/><path d="M1.500 4.800h9v1.200h-9z" fill="#fbe49a"/><path d="M1.500 7.500h5v4h-5z" fill="#f9d878"/><path d="M6.00 14.20v-2.90q0 -2.90 2.70 -2.90h4.41q2.70 0 2.70 2.90v2.90q-4.90 1.20 -9.80 0z" fill="#4a9af0" stroke="#1a5cc0" stroke-width="0.80"/><path d="M8.45 8.60h4.90l-2.45 3.60z" fill="#e6f1fd"/><circle cx="10.9" cy="5.80" r="3.00" fill="#ecbf92"/><path d="M7.90 6.70A3.00 3.00 0 1 1 13.90 6.70L13.06 6.70Q12.70 4.45 10.90 4.90Q9.10 4.45 8.74 6.70z" fill="#8a4a1c" stroke="#8a4a1c" stroke-width="0.40"/></svg></div>
<div class="cell" style="left:88px;width:111px">Администрация</div>
<div class="cell" style="left:204px;width:195px"></div>
<div class="cell" style="left:404px;width:195px">Бизнес подразделения общего наз...</div>
<div class="cell" style="left:604px;width:60px;letter-spacing:-0.35px">Подразд</div>
</div>
<div class="row" style="top:80px;width:660px;">
<div class="pm plus" style="left:48px;top:6px"></div>
<div class="ic" style="left:65px;top:2px"><svg width="16" height="16" viewBox="0 0 16 16"><path d="M.5 2h4.300l1.200 1.500h5.500v9h-11z" fill="#f4c85c" stroke="#d8962a" stroke-width="1"/><path d="M1.500 4.800h9v1.200h-9z" fill="#fbe49a"/><path d="M1.500 7.500h5v4h-5z" fill="#f9d878"/><path d="M6.00 14.20v-2.90q0 -2.90 2.70 -2.90h4.41q2.70 0 2.70 2.90v2.90q-4.90 1.20 -9.80 0z" fill="#4a9af0" stroke="#1a5cc0" stroke-width="0.80"/><path d="M8.45 8.60h4.90l-2.45 3.60z" fill="#e6f1fd"/><circle cx="10.9" cy="5.80" r="3.00" fill="#ecbf92"/><path d="M7.90 6.70A3.00 3.00 0 1 1 13.90 6.70L13.06 6.70Q12.70 4.45 10.90 4.90Q9.10 4.45 8.74 6.70z" fill="#8a4a1c" stroke="#8a4a1c" stroke-width="0.40"/></svg></div>
<div class="cell" style="left:88px;width:111px">Бухгалтерия</div>
<div class="cell" style="left:204px;width:195px"></div>
<div class="cell" style="left:404px;width:195px">Бизнес подразделения общего наз...</div>
<div class="cell" style="left:604px;width:60px;letter-spacing:-0.35px">Подразд</div>
</div>
<div class="row" style="top:101px;width:660px;">
<div class="pm plus" style="left:48px;top:6px"></div>
<div class="ic" style="left:65px;top:2px"><svg width="16" height="16" viewBox="0 0 16 16"><path d="M.5 2h4.300l1.200 1.500h5.500v9h-11z" fill="#f4c85c" stroke="#d8962a" stroke-width="1"/><path d="M1.500 4.800h9v1.200h-9z" fill="#fbe49a"/><path d="M1.500 7.500h5v4h-5z" fill="#f9d878"/><path d="M6.00 14.20v-2.90q0 -2.90 2.70 -2.90h4.41q2.70 0 2.70 2.90v2.90q-4.90 1.20 -9.80 0z" fill="#4a9af0" stroke="#1a5cc0" stroke-width="0.80"/><path d="M8.45 8.60h4.90l-2.45 3.60z" fill="#e6f1fd"/><circle cx="10.9" cy="5.80" r="3.00" fill="#ecbf92"/><path d="M7.90 6.70A3.00 3.00 0 1 1 13.90 6.70L13.06 6.70Q12.70 4.45 10.90 4.90Q9.10 4.45 8.74 6.70z" fill="#8a4a1c" stroke="#8a4a1c" stroke-width="0.40"/></svg></div>
<div class="cell" style="left:88px;width:111px">Отдел маркетинга</div>
<div class="cell" style="left:204px;width:195px"></div>
<div class="cell" style="left:404px;width:195px">Бизнес подразделения общего наз...</div>
<div class="cell" style="left:604px;width:60px;letter-spacing:-0.35px">Подразд</div>
</div>
<div class="row" style="top:122px;width:660px;background:#d4d0c8;font-weight:bold;">
<div class="pm" style="left:48px;top:6px"></div>
<div class="ic" style="left:65px;top:2px"><svg width="16" height="16" viewBox="0 0 16 16"><path d="M.5 2h4.300l1.200 1.500h5.500v9h-11z" fill="#f4c85c" stroke="#d8962a" stroke-width="1"/><path d="M1.500 4.800h9v1.200h-9z" fill="#fbe49a"/><path d="M1.500 7.500h5v4h-5z" fill="#f9d878"/><path d="M6.00 14.20v-2.90q0 -2.90 2.70 -2.90h4.41q2.70 0 2.70 2.90v2.90q-4.90 1.20 -9.80 0z" fill="#4a9af0" stroke="#1a5cc0" stroke-width="0.80"/><path d="M8.45 8.60h4.90l-2.45 3.60z" fill="#e6f1fd"/><circle cx="10.9" cy="5.80" r="3.00" fill="#ecbf92"/><path d="M7.90 6.70A3.00 3.00 0 1 1 13.90 6.70L13.06 6.70Q12.70 4.45 10.90 4.90Q9.10 4.45 8.74 6.70z" fill="#8a4a1c" stroke="#8a4a1c" stroke-width="0.40"/></svg></div>
<div class="cell" style="left:88px;width:111px">Отдел ИТ</div>
<div class="cell" style="left:204px;width:195px"></div>
<div class="cell" style="left:404px;width:195px">Служба автоматизации</div>
<div class="cell" style="left:604px;width:60px;letter-spacing:0px">Подраз</div>
</div>
<div class="row" style="top:143px;width:660px;">
<div class="pm" style="left:69px;top:6px"></div>
<div class="ic" style="left:86px;top:2px"><svg width="16" height="16" viewBox="0 0 16 16"><path d="M.5 2h4.300l1.200 1.500h5.500v9h-11z" fill="#f4c85c" stroke="#d8962a" stroke-width="1"/><path d="M1.500 4.800h9v1.200h-9z" fill="#fbe49a"/><path d="M1.500 7.500h5v4h-5z" fill="#f9d878"/><path d="M6.00 14.20v-2.90q0 -2.90 2.70 -2.90h4.41q2.70 0 2.70 2.90v2.90q-4.90 1.20 -9.80 0z" fill="#4a9af0" stroke="#1a5cc0" stroke-width="0.80"/><path d="M8.45 8.60h4.90l-2.45 3.60z" fill="#e6f1fd"/><circle cx="10.9" cy="5.80" r="3.00" fill="#ecbf92"/><path d="M7.90 6.70A3.00 3.00 0 1 1 13.90 6.70L13.06 6.70Q12.70 4.45 10.90 4.90Q9.10 4.45 8.74 6.70z" fill="#8a4a1c" stroke="#8a4a1c" stroke-width="0.40"/></svg></div>
<div class="cell" style="left:109px;width:90px">Служба автом...</div>
<div class="cell" style="left:204px;width:195px">Сидоров И. П. (Системный админис...</div>
<div class="cell" style="left:404px;width:195px">Служба автоматизации</div>
<div class="cell" style="left:604px;width:60px;letter-spacing:-0.35px">Подразд</div>
</div>
<div class="row" style="top:164px;width:660px;">
<div class="pm" style="left:69px;top:6px"></div>
<div class="ic" style="left:86px;top:2px"><svg width="16" height="16" viewBox="0 0 16 16"><path d="M.5 2h4.300l1.200 1.500h5.500v9h-11z" fill="#f4c85c" stroke="#d8962a" stroke-width="1"/><path d="M1.500 4.800h9v1.200h-9z" fill="#fbe49a"/><path d="M1.500 7.500h5v4h-5z" fill="#f9d878"/><path d="M6.00 14.20v-2.90q0 -2.90 2.70 -2.90h4.41q2.70 0 2.70 2.90v2.90q-4.90 1.20 -9.80 0z" fill="#4a9af0" stroke="#1a5cc0" stroke-width="0.80"/><path d="M8.45 8.60h4.90l-2.45 3.60z" fill="#e6f1fd"/><circle cx="10.9" cy="5.80" r="3.00" fill="#ecbf92"/><path d="M7.90 6.70A3.00 3.00 0 1 1 13.90 6.70L13.06 6.70Q12.70 4.45 10.90 4.90Q9.10 4.45 8.74 6.70z" fill="#8a4a1c" stroke="#8a4a1c" stroke-width="0.40"/></svg></div>
<div class="cell" style="left:109px;width:90px">Группа техниче...</div>
<div class="cell" style="left:204px;width:195px"></div>
<div class="cell" style="left:404px;width:195px">Служба автоматизации</div>
<div class="cell" style="left:604px;width:60px;letter-spacing:-0.35px">Подразд</div>
</div>
<div class="row" style="top:185px;width:660px;">
<div class="pm" style="left:69px;top:6px"></div>
<div class="ic" style="left:86px;top:2px"><svg width="16" height="16" viewBox="0 0 16 16"><path d="M.5 2h4.300l1.200 1.500h5.500v9h-11z" fill="#f4c85c" stroke="#d8962a" stroke-width="1"/><path d="M1.500 4.800h9v1.200h-9z" fill="#fbe49a"/><path d="M1.500 7.500h5v4h-5z" fill="#f9d878"/><path d="M6.00 14.20v-2.90q0 -2.90 2.70 -2.90h4.41q2.70 0 2.70 2.90v2.90q-4.90 1.20 -9.80 0z" fill="#4a9af0" stroke="#1a5cc0" stroke-width="0.80"/><path d="M8.45 8.60h4.90l-2.45 3.60z" fill="#e6f1fd"/><circle cx="10.9" cy="5.80" r="3.00" fill="#ecbf92"/><path d="M7.90 6.70A3.00 3.00 0 1 1 13.90 6.70L13.06 6.70Q12.70 4.45 10.90 4.90Q9.10 4.45 8.74 6.70z" fill="#8a4a1c" stroke="#8a4a1c" stroke-width="0.40"/></svg></div>
<div class="cell" style="left:109px;width:90px">Группа внедре...</div>
<div class="cell" style="left:204px;width:195px"></div>
<div class="cell" style="left:404px;width:195px">Служба автоматизации</div>
<div class="cell" style="left:604px;width:60px;letter-spacing:-0.35px">Подразд</div>
</div>
<div class="row" style="top:206px;width:660px;">
<div class="pm" style="left:48px;top:6px"></div>
<div class="ic" style="left:65px;top:2px"><svg width="16" height="16" viewBox="0 0 16 16"><path d="M.5 2h4.300l1.200 1.500h5.500v9h-11z" fill="#f4c85c" stroke="#d8962a" stroke-width="1"/><path d="M1.500 4.800h9v1.200h-9z" fill="#fbe49a"/><path d="M1.500 7.500h5v4h-5z" fill="#f9d878"/><path d="M6.00 14.20v-2.90q0 -2.90 2.70 -2.90h4.41q2.70 0 2.70 2.90v2.90q-4.90 1.20 -9.80 0z" fill="#4a9af0" stroke="#1a5cc0" stroke-width="0.80"/><path d="M8.45 8.60h4.90l-2.45 3.60z" fill="#e6f1fd"/><circle cx="10.9" cy="5.80" r="3.00" fill="#ecbf92"/><path d="M7.90 6.70A3.00 3.00 0 1 1 13.90 6.70L13.06 6.70Q12.70 4.45 10.90 4.90Q9.10 4.45 8.74 6.70z" fill="#8a4a1c" stroke="#8a4a1c" stroke-width="0.40"/></svg></div>
<div class="cell" style="left:88px;width:111px">Отдел качества</div>
<div class="cell" style="left:204px;width:195px"></div>
<div class="cell" style="left:404px;width:195px">Бизнес подразделения общего наз...</div>
<div class="cell" style="left:604px;width:60px;letter-spacing:-0.35px">Подразд</div>
</div>
<div class="vline" style="left:199px;top:17px;height:210px"></div>
<div class="vline" style="left:399px;top:17px;height:210px"></div>
<div class="vline" style="left:599px;top:17px;height:210px"></div>
<div class="sb" style="left:0;top:508px;width:647px"><div class="sbbtn" style="left:0"><div class="tri" style="left:1px;top:3px;border-right-color:#000"></div></div><div class="thumb" style="left:16px;width:510px"></div><div class="sbbtn" style="left:631px"><div class="tri" style="left:6px;top:3px;border-left-color:#000"></div></div></div>
</div></div>
<div class="abs" style="left:261px;top:704px;width:661px;height:157px;background:#fff;border-left:1px solid #b0aea8;border-top:1px solid #b0aea8"></div>
<div class="abs" style="left:261px;top:685px;width:661px;height:18px;background:linear-gradient(180deg,#a6b3d5 0%,#adb7d3 50%,#b4b9cc 100%);font-size:11px"><span class="t" style="left:4px;top:2px">Типовой доступ</span><svg class="abs" style="left:647px;top:6px" width="8" height="7" viewBox="0 0 8 7"><path d="M.5 0L7.5 7M7.5 0L.5 7" stroke="#000" stroke-width="1.5" fill="none"/></svg></div>
<div class="sunk" style="left:264px;top:708px;width:655px;height:152px;background:#fff"><div class="in">
<div class="gh" style="left:0px;top:0;width:300px;padding-left:6px">Имя</div>
<div class="gh" style="left:300px;top:0;width:200px;padding-left:6px">Тип</div>
<div class="gh" style="left:500px;top:0;width:160px;padding-left:6px">Категория</div>
<div class="abs mss" style="left:0;top:17px;width:660px;height:20px;background:#0a246a;color:#fff"><div class="abs" style="left:0;top:0;width:300px;height:20px;border:1px solid #e8d8b0"></div><div class="ic" style="left:22px;top:2px"><svg width="16" height="16" viewBox="0 0 16 16"><path d="M2.800 .7h8.200l3.600 3.600v9.900h-11.800z" fill="#fff" stroke="#b4bcc8" stroke-width="1"/><path d="M11 .7v3.600h3.600" fill="#e8eef6" stroke="#b4bcc8" stroke-width=".8"/><path d="M7.500 5.500h5.500M8.500 7.700h4.500M8.500 9.900h4.500M9 12h3.500" stroke="#2b7de0" stroke-width="1.200" stroke-dasharray="1.600 .7"/><path d="M0.04 13.80v-2.70q0 -2.70 2.51 -2.70h4.10q2.51 0 2.51 2.70v2.70q-4.56 1.12 -9.11 0z" fill="#5a6a80" stroke="#35404e" stroke-width="0.74"/><path d="M2.32 8.59h4.56l-2.28 3.34z" fill="#dfe6ee"/><path d="M4.04 8.97h1.12l-0.56 3.24z" fill="#e0601c"/><circle cx="4.6" cy="5.99" r="2.79" fill="#ecbf92"/><path d="M1.81 6.83A2.79 2.79 0 1 1 7.39 6.83L6.61 6.83Q6.27 4.73 4.60 5.15Q2.93 4.73 2.59 6.83z" fill="#8a4a1c" stroke="#8a4a1c" stroke-width="0.37"/></svg></div><div class="cell" style="left:47px">Доступ к папке "Техническая поддержка"</div><div class="cell" style="left:304px">Обычная</div><div class="abs" style="left:299px;top:0;width:1px;height:20px;background:#d4d0c8"></div><div class="abs" style="left:499px;top:0;width:1px;height:20px;background:#d4d0c8"></div></div>
<div class="sb" style="left:0;top:132px;width:651px"><div class="sbbtn" style="left:0"><div class="tri" style="left:1px;top:3px;border-right-color:#000"></div></div><div class="thumb" style="left:16px;width:335px"></div><div class="sbbtn" style="left:635px"><div class="tri" style="left:6px;top:3px;border-left-color:#000"></div></div></div>
</div></div>
<div class="abs" style="left:261px;top:861px;width:661px;height:24px;background:linear-gradient(180deg,#fbfaf9 0%,#efede9 50%,#d6d3cb 100%)">
<div class="abs" style="left:0;top:0;width:661px;height:1px;background:#000"></div>
<div class="abs" style="left:516px;top:0;width:113px;height:23px;background:linear-gradient(180deg,#eeece6 0%,#f8f7f4 40%,#fff 100%);border-right:1px solid #000;border-bottom:1px solid #000"></div>
<div class="ic" style="left:6px;top:3px"><svg width="16" height="16" viewBox="0 0 16 16"><path d="M6.25 10.53v-2.75q0 -2.75 2.56 -2.75h4.19q2.56 0 2.56 2.75v2.75q-4.66 1.14 -9.31 0z" fill="#7cc24e" stroke="#3f8a24" stroke-width="0.76"/><path d="M8.57 5.21h4.66l-2.33 3.42z" fill="#e4f5d8"/><circle cx="10.9" cy="2.55" r="2.85" fill="#ecbf92"/><path d="M8.05 3.40A2.85 2.85 0 1 1 13.75 3.40L12.95 3.40Q12.61 1.27 10.90 1.69Q9.19 1.27 8.85 3.40z" fill="#8a4a1c" stroke="#8a4a1c" stroke-width="0.38"/><path d="M0.10 13.17v-2.84q0 -2.84 2.64 -2.84h4.32q2.64 0 2.64 2.84v2.84q-4.80 1.18 -9.60 0z" fill="#4a9af0" stroke="#1a5cc0" stroke-width="0.78"/><path d="M2.50 7.68h4.80l-2.40 3.52z" fill="#e6f1fd"/><circle cx="4.9" cy="4.94" r="2.94" fill="#ecbf92"/><path d="M1.96 5.82A2.94 2.94 0 1 1 7.84 5.82L7.02 5.82Q6.66 3.62 4.90 4.06Q3.14 3.62 2.78 5.82z" fill="#8a4a1c" stroke="#8a4a1c" stroke-width="0.39"/></svg></div>
<span class="btab" style="left:25px;color:#808080;font-size:11.5px;letter-spacing:-0.339px;">Сотрудники</span>
<div class="ic" style="left:99px;top:3px"><svg width="16" height="16" viewBox="0 0 16 16"><path d="M.7 2.700h14.600v11.300h-2.800a1.100 1.100 0 0 0-2.200 0h-4.600a1.100 1.100 0 0 0-2.200 0h-2.800z" fill="#fbfdff" stroke="#2a7fd4" stroke-width="1.200" stroke-linejoin="round"/><rect x="2.200" y="4.200" width="5.200" height="6.300" fill="#a4cef6"/><circle cx="4.800" cy="6.200" r="1.800" fill="#ecbf92"/><path d="M3 6.500a1.800 1.800 0 1 1 3.600 0q-.4-1.200-1.800-1.100q-1.400-.1-1.800 1.100z" fill="#8a4a1c" stroke="#8a4a1c" stroke-width=".3"/><path d="M2.300 10.500v-.9q0-1.500 1.500-1.500h2q1.500 0 1.500 1.500v.9z" fill="#2f7fdc"/><path d="M9 5.200h5M9 7.500h5M9 9.800h4" stroke="#7a9cc8" stroke-width="1.100"/></svg></div>
<span class="btab" style="left:117px;color:#808080;font-size:11.5px;letter-spacing:-0.143px;">Должности</span>
<div class="ic" style="left:188px;top:3px"><svg width="16" height="16" viewBox="0 0 16 16"><path d="M.7 2.700h14.600v11.300h-2.800a1.100 1.100 0 0 0-2.200 0h-4.600a1.100 1.100 0 0 0-2.200 0h-2.800z" fill="#fbfdff" stroke="#2a7fd4" stroke-width="1.200" stroke-linejoin="round"/><rect x="2.200" y="4.200" width="5.200" height="6.300" fill="#a4cef6"/><circle cx="4.800" cy="6.200" r="1.800" fill="#ecbf92"/><path d="M3 6.500a1.800 1.800 0 1 1 3.600 0q-.4-1.200-1.800-1.100q-1.400-.1-1.800 1.100z" fill="#8a4a1c" stroke="#8a4a1c" stroke-width=".3"/><path d="M2.300 10.500v-.9q0-1.500 1.500-1.500h2q1.500 0 1.500 1.500v.9z" fill="#2f7fdc"/><path d="M9 5.200h5M9 7.500h5M9 9.800h4" stroke="#7a9cc8" stroke-width="1.100"/></svg></div>
<span class="btab" style="left:208px;color:#808080;font-size:11.5px;letter-spacing:-0.423px;">Структура должностей</span>
<div class="ic" style="left:339px;top:3px"><svg width="16" height="16" viewBox="0 0 16 16"><path d="M2.800 4.200h3.200q-1.100-3.400 1.500-3.400t1.500 3.400h3.200v3q3.200-1.100 3.200 1.400t-3.200 1.400v3.800h-3.300q1.100-2.600-1.400-2.600t-1.400 2.600h-3.300v-3.400q-2.400 1.100-2.400-1.500t2.400-1.500z" fill="#fcd440" stroke="#e8962a" stroke-width="1"/><circle cx="7.500" cy="8.500" r="2.600" fill="#f8b830" opacity=".7"/></svg></div>
<span class="btab" style="left:357px;color:#808080;font-size:11.5px;letter-spacing:-0.053px;">Организационные единицы</span>
<div class="ic" style="left:520px;top:3px"><svg width="16" height="16" viewBox="0 0 16 16"><path d="M2.800 .7h8.200l3.600 3.600v9.900h-11.800z" fill="#fff" stroke="#b4bcc8" stroke-width="1"/><path d="M11 .7v3.600h3.600" fill="#e8eef6" stroke="#b4bcc8" stroke-width=".8"/><path d="M7.500 5.500h5.500M8.500 7.700h4.500M8.500 9.900h4.500M9 12h3.500" stroke="#2b7de0" stroke-width="1.200" stroke-dasharray="1.600 .7"/><path d="M0.04 13.80v-2.70q0 -2.70 2.51 -2.70h4.10q2.51 0 2.51 2.70v2.70q-4.56 1.12 -9.11 0z" fill="#5a6a80" stroke="#35404e" stroke-width="0.74"/><path d="M2.32 8.59h4.56l-2.28 3.34z" fill="#dfe6ee"/><path d="M4.04 8.97h1.12l-0.56 3.24z" fill="#e0601c"/><circle cx="4.6" cy="5.99" r="2.79" fill="#ecbf92"/><path d="M1.81 6.83A2.79 2.79 0 1 1 7.39 6.83L6.61 6.83Q6.27 4.73 4.60 5.15Q2.93 4.73 2.59 6.83z" fill="#8a4a1c" stroke="#8a4a1c" stroke-width="0.37"/></svg></div>
<span class="btab" style="left:537px;color:#000;font-size:11.5px;letter-spacing:-0.161px;">Типовой доступ</span>
<div class="abs" style="left:94px;top:4px;width:1px;height:15px;background:#808080"></div>
<div class="abs" style="left:184px;top:4px;width:1px;height:15px;background:#808080"></div>
<div class="abs" style="left:334px;top:4px;width:1px;height:15px;background:#808080"></div>
</div>
<div class="phead" style="left:926px;top:125px;width:273px"><span class="t" style="left:5px;top:3px">Свойства</span><svg class="abs" style="left:259px;top:6px" width="8" height="7" viewBox="0 0 8 7"><path d="M.5 0L7.5 7M7.5 0L.5 7" stroke="#000" stroke-width="1.5" fill="none"/></svg></div>
<div class="abs" style="left:926px;top:144px;width:273px;height:25px;background:linear-gradient(180deg,#fff 0%,#f6f5f2 40%,#dbd8d0 100%)"></div>
<div class="abs" style="left:928px;top:146px;width:22px;height:22px;border:1px solid #1a3a9a;background:#d8dce8"></div>
<div class="ic" style="left:931px;top:149px"><svg width="16" height="16" viewBox="0 0 16 16"><path d="M3.500 6.500v3" stroke="#808080" stroke-width="1"/><rect x=".5" y=".5" width="6" height="6" fill="#fff" stroke="#808080" stroke-width="1"/><path d="M2 3.500h3M3.500 2v3" stroke="#000" stroke-width="1"/><rect x=".5" y="9.500" width="6" height="6" fill="#fff" stroke="#808080" stroke-width="1"/><path d="M2 12.500h3M3.500 11v3" stroke="#000" stroke-width="1"/><path d="M8.500 2.500h3.500M8.500 13.500h3.500" stroke="#404040" stroke-width="1.200"/><path d="M9.500 4.500h4.500M9.500 6.500h4.500M9.500 8.500h4.500M9.500 10.500h4.500" stroke="#909090" stroke-width=".9" stroke-dasharray="1.500 .8"/><path d="M12.500 2.500h1.500M12.500 13.500h1.500" stroke="#909090" stroke-width=".9"/></svg></div>
<div class="ic" style="left:954px;top:149px"><svg width="16" height="16" viewBox="0 0 16 16"><path d="M11.300 .5v11" stroke="#1c2ea8" stroke-width="1.100" stroke-dasharray="1 1 20"/><path d="M8.800 10.800h5l-2.500 4.200z" fill="#1c2ea8"/></svg><span style="position:absolute;left:1px;top:-1px;font:bold 9px/8px 'Liberation Sans',sans-serif;color:#000">A<br>Z</span></div>
<div class="abs" style="left:926px;top:169px;width:273px;height:716px;background:#fff;border:1px solid #8a8684;overflow:hidden">
<div class="abs" style="left:0;top:0;width:17px;height:715px;background:#d4d0c8"></div>
<div class="pcat" style="top:0px;width:272px"><div class="pm" style="left:3px;top:3px;border-color:#000;background:transparent"></div>
<span class="abs" style="left:17px;top:0;height:14px;line-height:13px;padding:0 2px;border:1px dotted #404040;font-size:11.5px">Роль</span>
</div>
<div class="prow" style="top:18px;width:255px;color:#808080"><span class="abs" style="left:3px;top:0">Тип</span><span class="abs" style="left:153px;top:0">Обычная</span><div class="abs" style="left:148px;top:0;width:1px;height:18px;background:#d4d0c8"></div></div>
<div class="prow" style="top:36px;width:255px;color:#000"><span class="abs" style="left:3px;top:0">Имя</span><span class="abs" style="left:153px;top:0">Доступ к папке &quot;...</span><div class="abs" style="left:148px;top:0;width:1px;height:18px;background:#d4d0c8"></div></div>
<div class="prow" style="top:54px;width:255px;color:#000"><span class="abs" style="left:3px;top:0">Категория</span><span class="abs" style="left:153px;top:0"></span><div class="abs" style="left:148px;top:0;width:1px;height:18px;background:#d4d0c8"></div></div>
<div class="prow" style="top:72px;width:255px;color:#000"><span class="abs" style="left:3px;top:0">Комментарий</span><span class="abs" style="left:153px;top:0"></span><div class="abs" style="left:148px;top:0;width:1px;height:18px;background:#d4d0c8"></div></div>
<div class="prow" style="top:90px;width:255px;color:#000"><span class="abs" style="left:3px;top:0">Область доступа</span><span class="abs" style="left:153px;top:0">Бесцветная</span><div class="abs" style="left:148px;top:0;width:1px;height:18px;background:#d4d0c8"></div></div>
<div class="pcat" style="top:108px;width:272px"><div class="pm" style="left:3px;top:3px;border-color:#000;background:transparent"></div>
<span class="abs" style="left:20px;top:0;font-size:11.5px">Категория</span>
</div>
<div class="prow" style="top:126px;width:255px;color:#808080"><span class="abs" style="left:3px;top:0">Имя</span><span class="abs" style="left:153px;top:0"></span><div class="abs" style="left:148px;top:0;width:1px;height:18px;background:#d4d0c8"></div></div>
<div class="prow" style="top:144px;width:255px;color:#808080"><span class="abs" style="left:3px;top:0">Комментарий</span><span class="abs" style="left:153px;top:0"></span><div class="abs" style="left:148px;top:0;width:1px;height:18px;background:#d4d0c8"></div></div>
<div class="prow" style="top:162px;width:255px;color:#808080"><span class="abs" style="left:3px;top:0">Тип категории</span><span class="abs" style="left:153px;top:0"></span><div class="abs" style="left:148px;top:0;width:1px;height:18px;background:#d4d0c8"></div></div>
</div>
<div class="abs" style="left:3px;top:885px;width:1196px;height:23px;background:linear-gradient(90deg,#d6d3cc 0%,#dedbd5 15%,#eae7e2 35%,#f3f1ed 55%,#f9f7f5 80%,#faf9f7 100%)"></div>
<div class="ic" style="left:7px;top:889px"><svg width="16" height="16" viewBox="0 0 16 16"><circle cx="7.300" cy="7.500" r="7" fill="#3f8ee8" stroke="#2a6cc0" stroke-width="1"/><path d="M2.500 5q5-4.500 9.600 0" fill="none" stroke="#8cc0f4" stroke-width="1.400"/><circle cx="7.300" cy="3.800" r="1.200" fill="#fff"/><path d="M5.800 6.200h2.500v5h1v1.200h-3.800v-1.200h1v-3.800h-.7z" fill="#fff"/></svg></div>
<span class="t" style="left:27px;top:890px;letter-spacing:.12px">Максимальное количество элементов в выборке 1000</span>
<div class="stbox" style="left:1028px;width:43px;text-align:left;padding-left:2px;background:#fff">10</div>
<div class="stbox" style="left:1073px;width:20px"></div><div class="ic" style="left:1075px;top:889px"><svg width="16" height="16" viewBox="0 0 16 16"><path d="M2 1h8l3 3v11h-11z" fill="#f4f7fb" stroke="#7f93ab" stroke-width="1"/><path d="M4 5h6M4 7h6M4 9h4" stroke="#7f93ab" stroke-width=".8"/><path d="M8 8l7 3l-3 1.500l2 2.500l-2 1l-2-2.500l-2 2z" fill="#3f8ee8" stroke="#1a5cb0" stroke-width=".6"/></svg></div>
<div class="stbox" style="left:1095px;width:24px;color:#909090">CAP</div>
<div class="stbox" style="left:1121px;width:30px">NUM</div>
<div class="stbox" style="left:1153px;width:29px;color:#909090">SCRL</div>
<svg class="abs" style="left:1186px;top:894px" width="12" height="12" viewBox="0 0 12 12"><path d="M11 1L1 11M11 5L5 11M11 9L9 11" stroke="#808080" stroke-width="1"/><path d="M12 1L2 11M12 5L6 11" stroke="#fff" stroke-width="1"/></svg>
</body></html>
